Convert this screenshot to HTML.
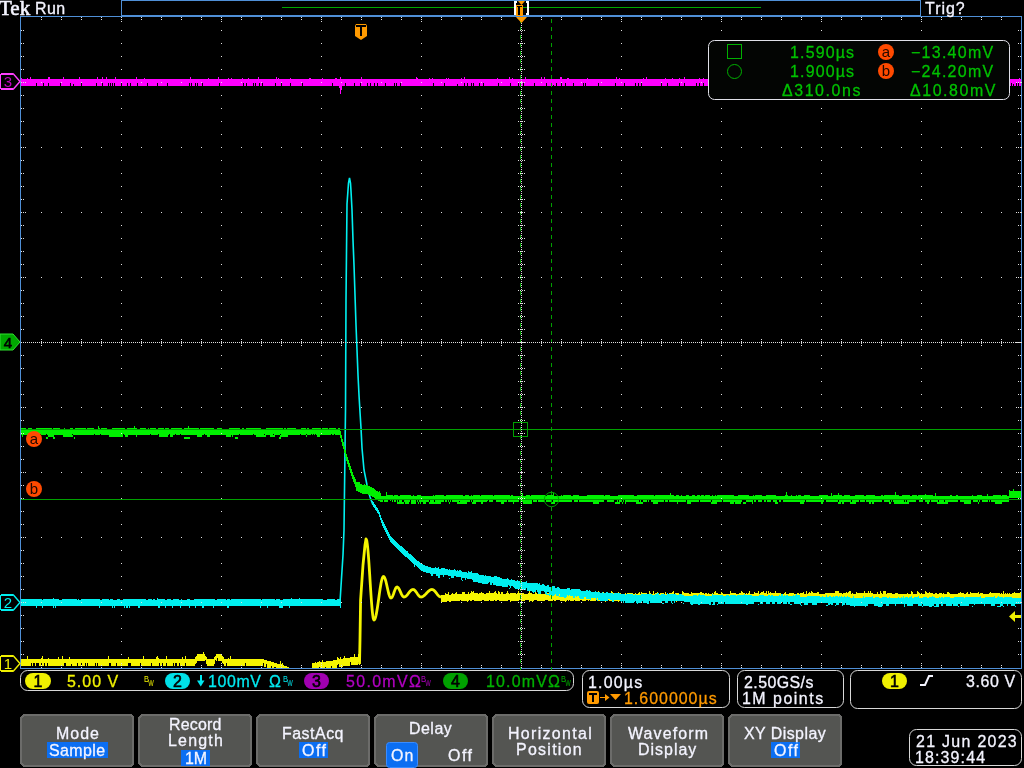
<!DOCTYPE html>
<html><head><meta charset="utf-8"><style>
html,body{margin:0;padding:0;background:#000;width:1024px;height:768px;overflow:hidden}
svg{position:absolute;left:0;top:0;display:block;will-change:transform}
text{white-space:pre}
</style></head><body>
<svg width="1024" height="768" viewBox="0 0 1024 768" shape-rendering="crispEdges">
<rect width="1024" height="768" fill="#000"/>
<path d="M121.5 0.5H920.5V15.5H121.5Z" fill="none" stroke="#4f8fd6"/><rect x="282" y="7" width="479" height="1" fill="#00a800"/><path d="M20.5 16.5H1021.5V668.5H20.5Z" fill="none" stroke="#4f8fd6"/><path d="M471 591h1v1h-1zM473 591h1v1h-1zM489 591h1v1h-1zM495 591h1v1h-1zM498 591h1v1h-1zM507 591h1v1h-1zM518 591h1v1h-1zM529 591h1v1h-1zM550 591h1v1h-1zM560 591h1v1h-1zM570 591h1v1h-1zM573 591h1v1h-1zM576 591h1v1h-1zM598 591h1v1h-1zM611 591h1v1h-1zM649 591h1v1h-1zM653 591h1v1h-1zM673 591h1v1h-1zM682 591h1v1h-1zM715 591h1v1h-1zM730 591h1v1h-1zM741 591h1v1h-1zM749 591h1v1h-1zM758 591h1v1h-1zM763 591h1v1h-1zM766 591h1v1h-1zM768 591h1v1h-1zM775 591h1v1h-1zM806 591h1v1h-1zM811 591h1v1h-1zM835 591h4v1h-4zM849 591h2v1h-2zM864 591h1v1h-1zM868 591h1v1h-1zM870 591h1v1h-1zM880 591h1v1h-1zM883 591h3v1h-3zM911 591h1v1h-1zM917 591h1v1h-1zM925 591h1v1h-1zM1003 591h1v1h-1zM448 592h1v1h-1zM456 592h1v1h-1zM462 592h3v1h-3zM468 592h1v1h-1zM471 592h3v1h-3zM481 592h1v1h-1zM489 592h1v1h-1zM494 592h2v1h-2zM498 592h2v1h-2zM501 592h2v1h-2zM507 592h1v1h-1zM518 592h1v1h-1zM529 592h1v1h-1zM535 592h1v1h-1zM550 592h1v1h-1zM552 592h1v1h-1zM558 592h1v1h-1zM560 592h1v1h-1zM570 592h1v1h-1zM573 592h1v1h-1zM576 592h1v1h-1zM598 592h1v1h-1zM603 592h1v1h-1zM607 592h1v1h-1zM611 592h2v1h-2zM618 592h1v1h-1zM639 592h1v1h-1zM641 592h1v1h-1zM649 592h1v1h-1zM653 592h1v1h-1zM657 592h1v1h-1zM665 592h1v1h-1zM672 592h2v1h-2zM682 592h2v1h-2zM691 592h1v1h-1zM700 592h2v1h-2zM714 592h2v1h-2zM721 592h1v1h-1zM730 592h1v1h-1zM741 592h2v1h-2zM749 592h1v1h-1zM754 592h1v1h-1zM758 592h1v1h-1zM761 592h3v1h-3zM766 592h1v1h-1zM768 592h1v1h-1zM770 592h1v1h-1zM775 592h1v1h-1zM785 592h1v1h-1zM803 592h1v1h-1zM806 592h1v1h-1zM809 592h1v1h-1zM811 592h2v1h-2zM817 592h2v1h-2zM835 592h4v1h-4zM846 592h1v1h-1zM848 592h3v1h-3zM856 592h1v1h-1zM864 592h1v1h-1zM868 592h1v1h-1zM870 592h1v1h-1zM877 592h1v1h-1zM880 592h1v1h-1zM883 592h3v1h-3zM911 592h2v1h-2zM917 592h2v1h-2zM925 592h2v1h-2zM929 592h1v1h-1zM947 592h2v1h-2zM960 592h1v1h-1zM967 592h1v1h-1zM970 592h1v1h-1zM978 592h1v1h-1zM990 592h1v1h-1zM1003 592h1v1h-1zM1014 592h1v1h-1zM1020 592h1v1h-1zM445 593h1v1h-1zM448 593h1v1h-1zM452 593h1v1h-1zM455 593h2v1h-2zM462 593h3v1h-3zM468 593h1v1h-1zM470 593h8v1h-8zM479 593h5v1h-5zM486 593h11v1h-11zM498 593h2v1h-2zM501 593h2v1h-2zM506 593h3v1h-3zM510 593h6v1h-6zM517 593h7v1h-7zM528 593h4v1h-4zM535 593h2v1h-2zM539 593h1v1h-1zM546 593h8v1h-8zM555 593h1v1h-1zM558 593h1v1h-1zM560 593h1v1h-1zM563 593h6v1h-6zM570 593h1v1h-1zM573 593h6v1h-6zM582 593h3v1h-3zM588 593h6v1h-6zM596 593h1v1h-1zM598 593h1v1h-1zM602 593h2v1h-2zM606 593h2v1h-2zM610 593h6v1h-6zM617 593h4v1h-4zM625 593h1v1h-1zM627 593h6v1h-6zM635 593h1v1h-1zM638 593h2v1h-2zM641 593h6v1h-6zM649 593h2v1h-2zM653 593h1v1h-1zM655 593h3v1h-3zM660 593h4v1h-4zM665 593h1v1h-1zM667 593h1v1h-1zM669 593h5v1h-5zM675 593h4v1h-4zM682 593h7v1h-7zM691 593h13v1h-13zM705 593h2v1h-2zM708 593h1v1h-1zM712 593h1v1h-1zM714 593h4v1h-4zM721 593h2v1h-2zM730 593h6v1h-6zM739 593h6v1h-6zM746 593h1v1h-1zM748 593h2v1h-2zM754 593h5v1h-5zM760 593h7v1h-7zM768 593h13v1h-13zM784 593h2v1h-2zM789 593h5v1h-5zM797 593h2v1h-2zM800 593h4v1h-4zM806 593h1v1h-1zM808 593h11v1h-11zM825 593h17v1h-17zM843 593h8v1h-8zM852 593h1v1h-1zM856 593h17v1h-17zM877 593h1v1h-1zM880 593h2v1h-2zM883 593h3v1h-3zM887 593h5v1h-5zM895 593h3v1h-3zM907 593h1v1h-1zM911 593h2v1h-2zM917 593h3v1h-3zM921 593h1v1h-1zM925 593h8v1h-8zM935 593h2v1h-2zM939 593h3v1h-3zM943 593h1v1h-1zM947 593h3v1h-3zM958 593h6v1h-6zM966 593h2v1h-2zM970 593h9v1h-9zM980 593h3v1h-3zM989 593h11v1h-11zM1001 593h1v1h-1zM1003 593h1v1h-1zM1005 593h1v1h-1zM1007 593h1v1h-1zM1009 593h1v1h-1zM1012 593h9v1h-9zM445 594h4v1h-4zM451 594h570v1h-570zM441 595h580v1h-580zM441 596h580v1h-580zM441 597h580v1h-580zM441 598h580v1h-580zM441 599h580v1h-580zM441 600h19v1h-19zM461 600h8v1h-8zM470 600h2v1h-2zM474 600h8v1h-8zM484 600h5v1h-5zM490 600h4v1h-4zM495 600h2v1h-2zM499 600h9v1h-9zM510 600h9v1h-9zM521 600h4v1h-4zM529 600h5v1h-5zM537 600h8v1h-8zM548 600h5v1h-5zM554 600h2v1h-2zM560 600h7v1h-7zM568 600h1v1h-1zM570 600h4v1h-4zM575 600h5v1h-5zM582 600h4v1h-4zM588 600h1v1h-1zM590 600h6v1h-6zM597 600h3v1h-3zM601 600h5v1h-5zM609 600h3v1h-3zM614 600h21v1h-21zM636 600h9v1h-9zM647 600h7v1h-7zM656 600h8v1h-8zM667 600h13v1h-13zM681 600h7v1h-7zM689 600h2v1h-2zM692 600h8v1h-8zM702 600h4v1h-4zM707 600h3v1h-3zM712 600h2v1h-2zM716 600h1v1h-1zM719 600h4v1h-4zM724 600h5v1h-5zM731 600h8v1h-8zM740 600h4v1h-4zM746 600h1v1h-1zM748 600h4v1h-4zM753 600h1v1h-1zM755 600h1v1h-1zM758 600h18v1h-18zM778 600h5v1h-5zM784 600h6v1h-6zM791 600h2v1h-2zM796 600h10v1h-10zM807 600h9v1h-9zM819 600h5v1h-5zM826 600h5v1h-5zM835 600h6v1h-6zM843 600h5v1h-5zM849 600h2v1h-2zM852 600h4v1h-4zM857 600h9v1h-9zM869 600h9v1h-9zM880 600h4v1h-4zM885 600h17v1h-17zM904 600h11v1h-11zM916 600h2v1h-2zM922 600h1v1h-1zM927 600h3v1h-3zM933 600h14v1h-14zM949 600h3v1h-3zM954 600h5v1h-5zM969 600h1v1h-1zM972 600h12v1h-12zM987 600h2v1h-2zM991 600h4v1h-4zM997 600h1v1h-1zM1005 600h2v1h-2zM1008 600h3v1h-3zM1013 600h2v1h-2zM1020 600h1v1h-1zM441 601h6v1h-6zM449 601h2v1h-2zM467 601h1v1h-1zM510 601h1v1h-1zM529 601h1v1h-1zM532 601h1v1h-1zM565 601h1v1h-1zM605 601h1v1h-1zM618 601h1v1h-1zM637 601h1v1h-1zM676 601h1v1h-1zM690 601h1v1h-1zM787 601h1v1h-1zM916 601h1v1h-1zM942 601h1v1h-1zM203 652h1v1h-1zM203 653h1v1h-1zM197 654h8v1h-8zM216 654h6v1h-6zM354 654h1v1h-1zM358 654h1v1h-1zM197 655h8v1h-8zM216 655h6v1h-6zM354 655h1v1h-1zM358 655h1v1h-1zM27 656h1v1h-1zM42 656h1v1h-1zM62 656h1v1h-1zM108 656h1v1h-1zM143 656h1v1h-1zM157 656h1v1h-1zM166 656h1v1h-1zM185 656h1v1h-1zM196 656h10v1h-10zM215 656h8v1h-8zM230 656h1v1h-1zM344 656h1v1h-1zM354 656h1v1h-1zM358 656h1v1h-1zM27 657h1v1h-1zM42 657h1v1h-1zM58 657h1v1h-1zM62 657h1v1h-1zM69 657h1v1h-1zM108 657h1v1h-1zM128 657h1v1h-1zM143 657h1v1h-1zM156 657h2v1h-2zM166 657h1v1h-1zM182 657h1v1h-1zM185 657h1v1h-1zM195 657h12v1h-12zM214 657h10v1h-10zM230 657h1v1h-1zM337 657h1v1h-1zM340 657h1v1h-1zM344 657h1v1h-1zM350 657h10v1h-10zM27 658h1v1h-1zM41 658h2v1h-2zM48 658h1v1h-1zM58 658h1v1h-1zM62 658h1v1h-1zM69 658h1v1h-1zM108 658h1v1h-1zM128 658h1v1h-1zM143 658h1v1h-1zM156 658h3v1h-3zM166 658h1v1h-1zM182 658h1v1h-1zM185 658h1v1h-1zM195 658h12v1h-12zM214 658h3v1h-3zM218 658h6v1h-6zM228 658h1v1h-1zM230 658h1v1h-1zM337 658h2v1h-2zM340 658h1v1h-1zM343 658h17v1h-17zM21 659h196v1h-196zM218 659h46v1h-46zM337 659h23v1h-23zM21 660h184v1h-184zM206 660h9v1h-9zM216 660h1v1h-1zM218 660h49v1h-49zM322 660h1v1h-1zM333 660h27v1h-27zM21 661h176v1h-176zM206 661h9v1h-9zM222 661h49v1h-49zM280 661h1v1h-1zM319 661h1v1h-1zM322 661h1v1h-1zM326 661h34v1h-34zM21 662h176v1h-176zM206 662h9v1h-9zM222 662h52v1h-52zM280 662h1v1h-1zM315 662h1v1h-1zM317 662h33v1h-33zM351 662h7v1h-7zM359 662h1v1h-1zM21 663h10v1h-10zM32 663h1v1h-1zM35 663h1v1h-1zM39 663h2v1h-2zM42 663h2v1h-2zM45 663h2v1h-2zM48 663h16v1h-16zM66 663h11v1h-11zM78 663h3v1h-3zM82 663h3v1h-3zM86 663h1v1h-1zM88 663h7v1h-7zM96 663h1v1h-1zM98 663h11v1h-11zM111 663h5v1h-5zM117 663h11v1h-11zM131 663h9v1h-9zM141 663h10v1h-10zM152 663h7v1h-7zM160 663h2v1h-2zM163 663h3v1h-3zM167 663h6v1h-6zM174 663h1v1h-1zM177 663h2v1h-2zM180 663h5v1h-5zM186 663h10v1h-10zM206 663h9v1h-9zM223 663h3v1h-3zM227 663h18v1h-18zM246 663h17v1h-17zM264 663h13v1h-13zM280 663h1v1h-1zM282 663h1v1h-1zM312 663h38v1h-38zM351 663h7v1h-7zM359 663h1v1h-1zM21 664h10v1h-10zM32 664h1v1h-1zM35 664h1v1h-1zM39 664h2v1h-2zM42 664h2v1h-2zM45 664h2v1h-2zM48 664h16v1h-16zM66 664h5v1h-5zM72 664h5v1h-5zM78 664h3v1h-3zM82 664h3v1h-3zM86 664h1v1h-1zM88 664h7v1h-7zM96 664h1v1h-1zM98 664h11v1h-11zM111 664h5v1h-5zM117 664h11v1h-11zM131 664h9v1h-9zM141 664h10v1h-10zM152 664h7v1h-7zM160 664h2v1h-2zM163 664h3v1h-3zM167 664h6v1h-6zM174 664h1v1h-1zM177 664h2v1h-2zM180 664h5v1h-5zM186 664h9v1h-9zM207 664h7v1h-7zM224 664h2v1h-2zM227 664h18v1h-18zM246 664h17v1h-17zM264 664h2v1h-2zM267 664h16v1h-16zM312 664h26v1h-26zM339 664h11v1h-11zM351 664h7v1h-7zM359 664h1v1h-1zM21 665h10v1h-10zM32 665h1v1h-1zM35 665h1v1h-1zM39 665h2v1h-2zM42 665h2v1h-2zM45 665h2v1h-2zM48 665h16v1h-16zM66 665h5v1h-5zM72 665h5v1h-5zM78 665h3v1h-3zM82 665h3v1h-3zM86 665h1v1h-1zM88 665h7v1h-7zM96 665h1v1h-1zM98 665h11v1h-11zM111 665h5v1h-5zM117 665h11v1h-11zM131 665h9v1h-9zM141 665h10v1h-10zM152 665h7v1h-7zM160 665h2v1h-2zM163 665h3v1h-3zM167 665h6v1h-6zM174 665h1v1h-1zM177 665h2v1h-2zM180 665h5v1h-5zM186 665h9v1h-9zM207 665h7v1h-7zM224 665h2v1h-2zM227 665h18v1h-18zM246 665h17v1h-17zM264 665h2v1h-2zM267 665h17v1h-17zM312 665h25v1h-25zM339 665h11v1h-11zM264 666h2v1h-2zM267 666h4v1h-4zM272 666h15v1h-15zM312 666h19v1h-19zM332 666h5v1h-5zM339 666h4v1h-4zM267 667h4v1h-4zM272 667h2v1h-2zM276 667h13v1h-13zM312 667h7v1h-7zM320 667h5v1h-5zM326 667h5v1h-5zM332 667h5v1h-5z" fill="#f5f500"/><path d="M359.50 664.00 L360.00 640.00 L360.60 600.00 L363.00 565.00 L365.00 545.00 L366.00 539.00 L366.33 539.35 L366.67 540.38 L367.00 542.08 L367.33 544.43 L367.67 547.37 L368.00 550.86 L368.33 554.85 L368.67 559.25 L369.00 564.00 L369.33 569.02 L369.67 574.21 L370.00 579.50 L370.33 584.79 L370.67 589.98 L371.00 595.00 L371.33 599.75 L371.67 604.15 L372.00 608.14 L372.33 611.63 L372.67 614.57 L373.00 616.92 L373.33 618.62 L373.67 619.65 L374.00 620.00 L374.34 619.86 L374.68 619.45 L375.02 618.78 L375.36 617.85 L375.70 616.67 L376.04 615.25 L376.38 613.63 L376.71 611.81 L377.05 609.82 L377.39 607.69 L377.73 605.43 L378.07 603.09 L378.41 600.69 L378.75 598.25 L379.09 595.81 L379.43 593.41 L379.77 591.07 L380.11 588.81 L380.45 586.68 L380.79 584.69 L381.12 582.87 L381.46 581.25 L381.80 579.83 L382.14 578.65 L382.48 577.72 L382.82 577.05 L383.16 576.64 L383.50 576.50 L383.84 576.61 L384.18 576.94 L384.52 577.47 L384.86 578.21 L385.20 579.13 L385.55 580.21 L385.89 581.44 L386.23 582.78 L386.57 584.22 L386.91 585.72 L387.25 587.25 L387.59 588.78 L387.93 590.28 L388.27 591.72 L388.61 593.06 L388.95 594.29 L389.30 595.37 L389.64 596.29 L389.98 597.03 L390.32 597.56 L390.66 597.89 L391.00 598.00 L391.33 597.92 L391.67 597.67 L392.00 597.26 L392.33 596.71 L392.67 596.04 L393.00 595.25 L393.33 594.38 L393.67 593.46 L394.00 592.50 L394.33 591.54 L394.67 590.62 L395.00 589.75 L395.33 588.96 L395.67 588.29 L396.00 587.74 L396.33 587.33 L396.67 587.08 L397.00 587.00 L397.33 587.06 L397.67 587.22 L398.00 587.50 L398.33 587.87 L398.67 588.33 L399.00 588.88 L399.33 589.50 L399.67 590.17 L400.00 590.89 L400.33 591.63 L400.67 592.37 L401.00 593.11 L401.33 593.83 L401.67 594.50 L402.00 595.12 L402.33 595.67 L402.67 596.13 L403.00 596.50 L403.33 596.78 L403.67 596.94 L404.00 597.00 L404.33 596.97 L404.67 596.90 L405.00 596.77 L405.33 596.60 L405.67 596.38 L406.00 596.12 L406.33 595.82 L406.67 595.49 L407.00 595.12 L407.33 594.74 L407.67 594.33 L408.00 593.90 L408.33 593.47 L408.67 593.03 L409.00 592.60 L409.33 592.17 L409.67 591.76 L410.00 591.38 L410.33 591.01 L410.67 590.68 L411.00 590.38 L411.33 590.12 L411.67 589.90 L412.00 589.73 L412.33 589.60 L412.67 589.53 L413.00 589.50 L413.33 589.53 L413.67 589.63 L414.00 589.79 L414.33 590.00 L414.67 590.27 L415.00 590.60 L415.33 590.97 L415.67 591.38 L416.00 591.81 L416.33 592.28 L416.67 592.76 L417.00 593.25 L417.33 593.74 L417.67 594.22 L418.00 594.69 L418.33 595.12 L418.67 595.53 L419.00 595.90 L419.33 596.23 L419.67 596.50 L420.00 596.71 L420.33 596.87 L420.67 596.97 L421.00 597.00 L421.33 596.98 L421.67 596.93 L422.00 596.85 L422.33 596.73 L422.67 596.58 L423.00 596.40 L423.33 596.20 L423.67 595.96 L424.00 595.71 L424.33 595.43 L424.67 595.12 L425.00 594.81 L425.33 594.48 L425.67 594.13 L426.00 593.78 L426.33 593.43 L426.67 593.07 L427.00 592.72 L427.33 592.37 L427.67 592.02 L428.00 591.69 L428.33 591.38 L428.67 591.07 L429.00 590.79 L429.33 590.54 L429.67 590.30 L430.00 590.10 L430.33 589.92 L430.67 589.77 L431.00 589.65 L431.33 589.57 L431.67 589.52 L432.00 589.50 L432.33 589.53 L432.67 589.60 L433.00 589.73 L433.33 589.90 L433.67 590.12 L434.00 590.38 L434.33 590.68 L434.67 591.01 L435.00 591.38 L435.33 591.76 L435.67 592.17 L436.00 592.60 L436.33 593.03 L436.67 593.47 L437.00 593.90 L437.33 594.33 L437.67 594.74 L438.00 595.12 L438.33 595.49 L438.67 595.82 L439.00 596.12 L439.33 596.38 L439.67 596.60 L440.00 596.77 L440.33 596.90 L440.67 596.97 L441.00 597.00" fill="none" stroke="#f5f500" stroke-width="2.8" stroke-linejoin="round" shape-rendering="auto"/><path d="M372 501h1v1h-1zM372 502h2v1h-2zM372 503h2v1h-2zM372 504h3v1h-3zM373 505h3v1h-3zM373 506h3v1h-3zM374 507h3v1h-3zM375 508h3v1h-3zM375 509h3v1h-3zM376 510h3v1h-3zM377 511h2v1h-2zM377 512h3v1h-3zM378 513h2v1h-2zM379 514h1v1h-1zM379 515h2v1h-2zM379 516h2v1h-2zM380 517h1v1h-1zM380 518h2v1h-2zM380 519h2v1h-2zM381 520h2v1h-2zM381 521h2v1h-2zM381 522h3v1h-3zM382 523h2v1h-2zM382 524h3v1h-3zM382 525h3v1h-3zM383 526h3v1h-3zM383 527h3v1h-3zM384 528h3v1h-3zM384 529h3v1h-3zM385 530h3v1h-3zM385 531h3v1h-3zM386 532h3v1h-3zM386 533h3v1h-3zM387 534h3v1h-3zM387 535h3v1h-3zM388 536h3v1h-3zM388 537h4v1h-4zM389 538h4v1h-4zM389 539h5v1h-5zM390 540h5v1h-5zM390 541h6v1h-6zM391 542h6v1h-6zM392 543h6v1h-6zM393 544h6v1h-6zM394 545h6v1h-6zM395 546h7v1h-7zM396 547h7v1h-7zM397 548h7v1h-7zM398 549h7v1h-7zM399 550h7v1h-7zM400 551h8v1h-8zM401 552h7v1h-7zM402 553h7v1h-7zM403 554h8v1h-8zM404 555h8v1h-8zM405 556h8v1h-8zM407 557h7v1h-7zM408 558h7v1h-7zM409 559h7v1h-7zM410 560h7v1h-7zM411 561h8v1h-8zM412 562h8v1h-8zM413 563h8v1h-8zM414 564h9v1h-9zM414 565h1v1h-1zM416 565h9v1h-9zM414 566h1v1h-1zM417 566h11v1h-11zM418 567h13v1h-13zM435 567h1v1h-1zM438 567h1v1h-1zM419 568h20v1h-20zM441 568h4v1h-4zM420 569h28v1h-28zM449 569h1v1h-1zM454 569h1v1h-1zM421 570h35v1h-35zM457 570h1v1h-1zM459 570h2v1h-2zM423 571h39v1h-39zM468 571h1v1h-1zM471 571h1v1h-1zM426 572h41v1h-41zM468 572h4v1h-4zM430 573h48v1h-48zM431 574h2v1h-2zM436 574h43v1h-43zM431 575h2v1h-2zM436 575h4v1h-4zM443 575h1v1h-1zM448 575h36v1h-36zM485 575h1v1h-1zM438 576h2v1h-2zM443 576h1v1h-1zM451 576h3v1h-3zM456 576h35v1h-35zM494 576h3v1h-3zM438 577h2v1h-2zM451 577h3v1h-3zM461 577h39v1h-39zM449 578h1v1h-1zM461 578h1v1h-1zM465 578h1v1h-1zM467 578h35v1h-35zM507 578h1v1h-1zM461 579h1v1h-1zM465 579h1v1h-1zM472 579h37v1h-37zM511 579h1v1h-1zM462 580h1v1h-1zM473 580h42v1h-42zM517 580h1v1h-1zM473 581h49v1h-49zM526 581h1v1h-1zM478 582h11v1h-11zM490 582h37v1h-37zM482 583h6v1h-6zM490 583h2v1h-2zM493 583h45v1h-45zM539 583h1v1h-1zM490 584h2v1h-2zM493 584h47v1h-47zM542 584h2v1h-2zM496 585h12v1h-12zM509 585h36v1h-36zM547 585h2v1h-2zM502 586h6v1h-6zM510 586h1v1h-1zM513 586h36v1h-36zM552 586h3v1h-3zM510 587h1v1h-1zM514 587h41v1h-41zM557 587h2v1h-2zM509 588h1v1h-1zM515 588h11v1h-11zM527 588h33v1h-33zM567 588h3v1h-3zM521 589h5v1h-5zM527 589h43v1h-43zM571 589h9v1h-9zM527 590h9v1h-9zM537 590h44v1h-44zM586 590h2v1h-2zM589 590h1v1h-1zM532 591h4v1h-4zM537 591h4v1h-4zM544 591h47v1h-47zM595 591h1v1h-1zM533 592h1v1h-1zM538 592h3v1h-3zM545 592h2v1h-2zM549 592h51v1h-51zM602 592h1v1h-1zM606 592h2v1h-2zM538 593h3v1h-3zM545 593h2v1h-2zM549 593h64v1h-64zM614 593h6v1h-6zM657 593h2v1h-2zM667 593h1v1h-1zM546 594h9v1h-9zM556 594h3v1h-3zM560 594h65v1h-65zM626 594h7v1h-7zM635 594h1v1h-1zM641 594h11v1h-11zM655 594h4v1h-4zM661 594h4v1h-4zM667 594h9v1h-9zM679 594h3v1h-3zM699 594h1v1h-1zM712 594h1v1h-1zM744 594h1v1h-1zM781 594h2v1h-2zM796 594h1v1h-1zM549 595h1v1h-1zM551 595h3v1h-3zM556 595h3v1h-3zM560 595h7v1h-7zM568 595h1v1h-1zM570 595h114v1h-114zM693 595h4v1h-4zM698 595h7v1h-7zM712 595h11v1h-11zM726 595h3v1h-3zM730 595h6v1h-6zM737 595h15v1h-15zM759 595h5v1h-5zM768 595h2v1h-2zM771 595h2v1h-2zM779 595h1v1h-1zM781 595h2v1h-2zM784 595h1v1h-1zM786 595h2v1h-2zM793 595h1v1h-1zM795 595h5v1h-5zM826 595h1v1h-1zM559 596h8v1h-8zM573 596h2v1h-2zM576 596h1v1h-1zM579 596h221v1h-221zM807 596h13v1h-13zM822 596h1v1h-1zM826 596h1v1h-1zM829 596h2v1h-2zM833 596h1v1h-1zM835 596h3v1h-3zM839 596h1v1h-1zM841 596h1v1h-1zM844 596h1v1h-1zM847 596h1v1h-1zM853 596h1v1h-1zM863 596h1v1h-1zM872 596h1v1h-1zM903 596h1v1h-1zM911 596h1v1h-1zM918 596h1v1h-1zM932 596h1v1h-1zM980 596h1v1h-1zM994 596h1v1h-1zM998 596h1v1h-1zM564 597h2v1h-2zM573 597h2v1h-2zM579 597h5v1h-5zM586 597h264v1h-264zM853 597h1v1h-1zM863 597h1v1h-1zM865 597h8v1h-8zM875 597h4v1h-4zM882 597h5v1h-5zM889 597h1v1h-1zM898 597h1v1h-1zM901 597h1v1h-1zM903 597h1v1h-1zM905 597h3v1h-3zM909 597h3v1h-3zM914 597h5v1h-5zM923 597h4v1h-4zM929 597h6v1h-6zM939 597h1v1h-1zM941 597h2v1h-2zM944 597h6v1h-6zM954 597h10v1h-10zM965 597h16v1h-16zM985 597h10v1h-10zM997 597h6v1h-6zM1004 597h8v1h-8zM53 598h1v1h-1zM157 598h1v1h-1zM291 598h1v1h-1zM299 598h1v1h-1zM580 598h4v1h-4zM586 598h5v1h-5zM596 598h1v1h-1zM598 598h423v1h-423zM21 599h21v1h-21zM43 599h16v1h-16zM62 599h15v1h-15zM78 599h1v1h-1zM81 599h19v1h-19zM102 599h7v1h-7zM110 599h3v1h-3zM117 599h3v1h-3zM123 599h23v1h-23zM148 599h4v1h-4zM153 599h2v1h-2zM157 599h8v1h-8zM167 599h4v1h-4zM173 599h6v1h-6zM181 599h1v1h-1zM187 599h3v1h-3zM194 599h21v1h-21zM217 599h9v1h-9zM227 599h3v1h-3zM231 599h30v1h-30zM262 599h13v1h-13zM276 599h4v1h-4zM283 599h40v1h-40zM327 599h8v1h-8zM337 599h4v1h-4zM590 599h1v1h-1zM596 599h1v1h-1zM598 599h10v1h-10zM610 599h411v1h-411zM21 600h320v1h-320zM597 600h1v1h-1zM600 600h8v1h-8zM612 600h2v1h-2zM620 600h401v1h-401zM21 601h320v1h-320zM612 601h2v1h-2zM621 601h1v1h-1zM623 601h1v1h-1zM625 601h10v1h-10zM636 601h6v1h-6zM643 601h6v1h-6zM650 601h12v1h-12zM665 601h3v1h-3zM671 601h1v1h-1zM674 601h1v1h-1zM684 601h337v1h-337zM21 602h320v1h-320zM621 602h1v1h-1zM623 602h1v1h-1zM625 602h9v1h-9zM636 602h6v1h-6zM643 602h6v1h-6zM650 602h12v1h-12zM665 602h3v1h-3zM671 602h1v1h-1zM674 602h1v1h-1zM690 602h21v1h-21zM713 602h2v1h-2zM718 602h6v1h-6zM725 602h29v1h-29zM760 602h3v1h-3zM766 602h4v1h-4zM772 602h3v1h-3zM777 602h4v1h-4zM783 602h4v1h-4zM788 602h2v1h-2zM794 602h227v1h-227zM21 603h320v1h-320zM637 603h1v1h-1zM647 603h2v1h-2zM662 603h2v1h-2zM672 603h1v1h-1zM683 603h1v1h-1zM690 603h21v1h-21zM713 603h2v1h-2zM718 603h6v1h-6zM725 603h29v1h-29zM760 603h3v1h-3zM766 603h4v1h-4zM772 603h3v1h-3zM777 603h4v1h-4zM783 603h4v1h-4zM788 603h2v1h-2zM794 603h7v1h-7zM804 603h4v1h-4zM812 603h5v1h-5zM828 603h5v1h-5zM836 603h3v1h-3zM842 603h3v1h-3zM846 603h175v1h-175zM21 604h320v1h-320zM691 604h2v1h-2zM698 604h2v1h-2zM709 604h2v1h-2zM712 604h3v1h-3zM717 604h1v1h-1zM746 604h2v1h-2zM758 604h1v1h-1zM790 604h2v1h-2zM800 604h1v1h-1zM804 604h4v1h-4zM812 604h5v1h-5zM828 604h2v1h-2zM831 604h2v1h-2zM836 604h3v1h-3zM842 604h3v1h-3zM846 604h22v1h-22zM874 604h9v1h-9zM886 604h3v1h-3zM895 604h1v1h-1zM904 604h1v1h-1zM907 604h6v1h-6zM918 604h4v1h-4zM923 604h11v1h-11zM936 604h3v1h-3zM941 604h2v1h-2zM946 604h6v1h-6zM953 604h5v1h-5zM960 604h9v1h-9zM974 604h1v1h-1zM984 604h1v1h-1zM991 604h4v1h-4zM1000 604h3v1h-3zM1007 604h1v1h-1zM1011 604h4v1h-4zM21 605h320v1h-320zM801 605h1v1h-1zM826 605h2v1h-2zM835 605h1v1h-1zM842 605h1v1h-1zM850 605h18v1h-18zM874 605h9v1h-9zM886 605h3v1h-3zM895 605h1v1h-1zM904 605h1v1h-1zM907 605h6v1h-6zM918 605h4v1h-4zM923 605h11v1h-11zM936 605h3v1h-3zM941 605h2v1h-2zM946 605h6v1h-6zM953 605h5v1h-5zM960 605h9v1h-9zM984 605h1v1h-1zM991 605h4v1h-4zM1000 605h3v1h-3zM1007 605h1v1h-1zM1011 605h4v1h-4zM36 606h1v1h-1zM42 606h1v1h-1zM53 606h1v1h-1zM55 606h1v1h-1zM99 606h1v1h-1zM112 606h1v1h-1zM114 606h1v1h-1zM124 606h1v1h-1zM126 606h2v1h-2zM129 606h1v1h-1zM138 606h2v1h-2zM158 606h2v1h-2zM165 606h1v1h-1zM172 606h1v1h-1zM180 606h1v1h-1zM189 606h1v1h-1zM195 606h1v1h-1zM202 606h2v1h-2zM213 606h1v1h-1zM227 606h2v1h-2zM260 606h1v1h-1zM267 606h1v1h-1zM279 606h4v1h-4zM289 606h1v1h-1zM340 606h1v1h-1zM854 606h1v1h-1zM865 606h1v1h-1zM878 606h4v1h-4zM904 606h1v1h-1zM922 606h1v1h-1zM929 606h3v1h-3zM934 606h5v1h-5zM958 606h1v1h-1zM972 606h1v1h-1zM997 606h4v1h-4zM1003 606h1v1h-1zM1015 606h1v1h-1zM36 607h1v1h-1zM42 607h1v1h-1zM53 607h1v1h-1zM55 607h1v1h-1zM99 607h1v1h-1zM112 607h1v1h-1zM114 607h1v1h-1zM124 607h1v1h-1zM126 607h2v1h-2zM129 607h1v1h-1zM138 607h2v1h-2zM158 607h2v1h-2zM165 607h1v1h-1zM172 607h1v1h-1zM180 607h1v1h-1zM189 607h1v1h-1zM195 607h1v1h-1zM202 607h2v1h-2zM213 607h1v1h-1zM227 607h2v1h-2zM260 607h1v1h-1zM267 607h1v1h-1zM279 607h4v1h-4zM289 607h1v1h-1zM340 607h1v1h-1z" fill="#00f0f0"/><path d="M340 602 L341.4 580 L343 555 L344 530 L345.5 410 L346 300 L347 204 L348.5 183 L349.5 178 L350.5 183 L351 191 L352 210 L353 240 L354 265 L355 295 L356 325 L357 350 L358 375 L359 395 L360 412 L361 428 L362 448 L364 470 L367 485 L370 497 L373 505" fill="none" stroke="#00f0f0" stroke-width="1.6" shape-rendering="auto"/><path d="M30 77h1v1h-1zM48 77h2v1h-2zM63 77h1v1h-1zM79 77h1v1h-1zM97 77h1v1h-1zM102 77h1v1h-1zM106 77h1v1h-1zM115 77h1v1h-1zM136 77h1v1h-1zM190 77h1v1h-1zM218 77h1v1h-1zM258 77h1v1h-1zM276 77h1v1h-1zM340 77h1v1h-1zM361 77h1v1h-1zM416 77h1v1h-1zM464 77h1v1h-1zM509 77h1v1h-1zM525 77h1v1h-1zM541 77h1v1h-1zM544 77h1v1h-1zM560 77h2v1h-2zM616 77h1v1h-1zM646 77h1v1h-1zM684 77h1v1h-1zM21 78h1v1h-1zM27 78h1v1h-1zM30 78h1v1h-1zM48 78h2v1h-2zM63 78h1v1h-1zM79 78h1v1h-1zM97 78h1v1h-1zM102 78h1v1h-1zM106 78h1v1h-1zM115 78h1v1h-1zM136 78h1v1h-1zM144 78h1v1h-1zM190 78h1v1h-1zM208 78h1v1h-1zM218 78h1v1h-1zM228 78h1v1h-1zM231 78h1v1h-1zM242 78h1v1h-1zM248 78h1v1h-1zM258 78h1v1h-1zM276 78h1v1h-1zM278 78h1v1h-1zM290 78h1v1h-1zM309 78h2v1h-2zM322 78h1v1h-1zM335 78h2v1h-2zM340 78h1v1h-1zM361 78h1v1h-1zM416 78h2v1h-2zM429 78h1v1h-1zM432 78h1v1h-1zM446 78h1v1h-1zM448 78h1v1h-1zM461 78h1v1h-1zM464 78h1v1h-1zM497 78h1v1h-1zM509 78h1v1h-1zM512 78h1v1h-1zM525 78h1v1h-1zM541 78h1v1h-1zM544 78h1v1h-1zM560 78h2v1h-2zM567 78h2v1h-2zM587 78h1v1h-1zM616 78h1v1h-1zM619 78h1v1h-1zM643 78h1v1h-1zM646 78h1v1h-1zM665 78h1v1h-1zM672 78h1v1h-1zM679 78h1v1h-1zM684 78h1v1h-1zM699 78h1v1h-1zM703 78h1v1h-1zM1019 78h1v1h-1zM21 79h688v1h-688zM1009 79h12v1h-12zM21 80h688v1h-688zM1009 80h12v1h-12zM21 81h688v1h-688zM1009 81h12v1h-12zM21 82h688v1h-688zM1009 82h12v1h-12zM21 83h15v1h-15zM37 83h6v1h-6zM44 83h4v1h-4zM49 83h11v1h-11zM61 83h9v1h-9zM71 83h10v1h-10zM82 83h14v1h-14zM97 83h5v1h-5zM103 83h5v1h-5zM109 83h1v1h-1zM111 83h1v1h-1zM113 83h1v1h-1zM115 83h6v1h-6zM122 83h5v1h-5zM128 83h2v1h-2zM131 83h6v1h-6zM138 83h9v1h-9zM148 83h9v1h-9zM158 83h9v1h-9zM168 83h21v1h-21zM190 83h1v1h-1zM192 83h3v1h-3zM196 83h1v1h-1zM198 83h4v1h-4zM203 83h16v1h-16zM220 83h23v1h-23zM244 83h2v1h-2zM247 83h6v1h-6zM254 83h1v1h-1zM256 83h3v1h-3zM260 83h2v1h-2zM263 83h12v1h-12zM276 83h5v1h-5zM282 83h8v1h-8zM291 83h11v1h-11zM303 83h29v1h-29zM333 83h12v1h-12zM346 83h8v1h-8zM355 83h5v1h-5zM361 83h6v1h-6zM368 83h2v1h-2zM371 83h3v1h-3zM375 83h2v1h-2zM378 83h7v1h-7zM386 83h8v1h-8zM395 83h1v1h-1zM397 83h3v1h-3zM401 83h32v1h-32zM434 83h10v1h-10zM445 83h19v1h-19zM465 83h2v1h-2zM468 83h3v1h-3zM472 83h1v1h-1zM474 83h5v1h-5zM480 83h3v1h-3zM484 83h14v1h-14zM499 83h11v1h-11zM511 83h7v1h-7zM519 83h1v1h-1zM521 83h2v1h-2zM524 83h10v1h-10zM535 83h11v1h-11zM547 83h4v1h-4zM552 83h4v1h-4zM557 83h4v1h-4zM562 83h3v1h-3zM566 83h7v1h-7zM574 83h9v1h-9zM584 83h1v1h-1zM586 83h12v1h-12zM599 83h16v1h-16zM616 83h8v1h-8zM625 83h10v1h-10zM636 83h2v1h-2zM639 83h2v1h-2zM642 83h19v1h-19zM662 83h5v1h-5zM668 83h11v1h-11zM680 83h4v1h-4zM685 83h11v1h-11zM697 83h2v1h-2zM700 83h3v1h-3zM704 83h5v1h-5zM1009 83h2v1h-2zM1012 83h4v1h-4zM1017 83h1v1h-1zM1019 83h2v1h-2zM21 84h15v1h-15zM37 84h6v1h-6zM44 84h4v1h-4zM49 84h11v1h-11zM61 84h9v1h-9zM71 84h2v1h-2zM74 84h7v1h-7zM82 84h14v1h-14zM97 84h5v1h-5zM103 84h5v1h-5zM109 84h1v1h-1zM111 84h1v1h-1zM113 84h1v1h-1zM115 84h6v1h-6zM122 84h5v1h-5zM128 84h2v1h-2zM131 84h6v1h-6zM138 84h9v1h-9zM148 84h9v1h-9zM158 84h9v1h-9zM168 84h21v1h-21zM190 84h1v1h-1zM192 84h3v1h-3zM196 84h1v1h-1zM198 84h4v1h-4zM203 84h16v1h-16zM220 84h23v1h-23zM244 84h2v1h-2zM247 84h6v1h-6zM254 84h1v1h-1zM256 84h3v1h-3zM260 84h2v1h-2zM263 84h12v1h-12zM276 84h5v1h-5zM282 84h8v1h-8zM291 84h11v1h-11zM303 84h29v1h-29zM333 84h12v1h-12zM346 84h8v1h-8zM355 84h5v1h-5zM361 84h6v1h-6zM368 84h2v1h-2zM371 84h3v1h-3zM375 84h2v1h-2zM378 84h7v1h-7zM386 84h8v1h-8zM395 84h1v1h-1zM397 84h3v1h-3zM401 84h32v1h-32zM434 84h10v1h-10zM445 84h12v1h-12zM458 84h6v1h-6zM465 84h2v1h-2zM468 84h3v1h-3zM472 84h1v1h-1zM474 84h5v1h-5zM480 84h3v1h-3zM484 84h14v1h-14zM499 84h11v1h-11zM511 84h7v1h-7zM519 84h1v1h-1zM521 84h2v1h-2zM524 84h10v1h-10zM535 84h11v1h-11zM547 84h4v1h-4zM552 84h4v1h-4zM557 84h4v1h-4zM562 84h3v1h-3zM566 84h7v1h-7zM574 84h9v1h-9zM584 84h1v1h-1zM586 84h12v1h-12zM599 84h16v1h-16zM616 84h8v1h-8zM625 84h10v1h-10zM636 84h2v1h-2zM639 84h2v1h-2zM642 84h19v1h-19zM662 84h5v1h-5zM668 84h11v1h-11zM680 84h4v1h-4zM685 84h11v1h-11zM697 84h2v1h-2zM700 84h3v1h-3zM704 84h5v1h-5zM1009 84h2v1h-2zM1012 84h1v1h-1zM1014 84h2v1h-2zM1017 84h1v1h-1zM1019 84h2v1h-2zM21 85h15v1h-15zM37 85h6v1h-6zM44 85h4v1h-4zM49 85h11v1h-11zM61 85h9v1h-9zM71 85h2v1h-2zM74 85h7v1h-7zM82 85h14v1h-14zM97 85h5v1h-5zM103 85h5v1h-5zM109 85h1v1h-1zM111 85h1v1h-1zM113 85h1v1h-1zM115 85h6v1h-6zM122 85h5v1h-5zM128 85h2v1h-2zM131 85h6v1h-6zM138 85h9v1h-9zM148 85h9v1h-9zM158 85h9v1h-9zM168 85h21v1h-21zM190 85h1v1h-1zM192 85h3v1h-3zM196 85h1v1h-1zM198 85h4v1h-4zM203 85h16v1h-16zM220 85h23v1h-23zM244 85h2v1h-2zM247 85h6v1h-6zM254 85h1v1h-1zM256 85h3v1h-3zM260 85h2v1h-2zM263 85h12v1h-12zM276 85h5v1h-5zM282 85h8v1h-8zM291 85h11v1h-11zM303 85h29v1h-29zM333 85h12v1h-12zM346 85h8v1h-8zM355 85h5v1h-5zM361 85h6v1h-6zM368 85h2v1h-2zM371 85h3v1h-3zM375 85h2v1h-2zM378 85h7v1h-7zM386 85h8v1h-8zM395 85h1v1h-1zM397 85h3v1h-3zM401 85h32v1h-32zM434 85h10v1h-10zM445 85h12v1h-12zM458 85h6v1h-6zM465 85h2v1h-2zM468 85h3v1h-3zM472 85h1v1h-1zM474 85h5v1h-5zM480 85h3v1h-3zM484 85h14v1h-14zM499 85h11v1h-11zM511 85h7v1h-7zM519 85h1v1h-1zM521 85h2v1h-2zM524 85h10v1h-10zM535 85h11v1h-11zM547 85h4v1h-4zM552 85h1v1h-1zM554 85h2v1h-2zM557 85h4v1h-4zM562 85h3v1h-3zM566 85h7v1h-7zM574 85h9v1h-9zM584 85h1v1h-1zM586 85h12v1h-12zM599 85h16v1h-16zM616 85h8v1h-8zM625 85h10v1h-10zM636 85h2v1h-2zM639 85h2v1h-2zM642 85h19v1h-19zM662 85h5v1h-5zM668 85h11v1h-11zM680 85h4v1h-4zM685 85h11v1h-11zM697 85h2v1h-2zM700 85h3v1h-3zM704 85h5v1h-5zM1009 85h2v1h-2zM1012 85h1v1h-1zM1014 85h2v1h-2zM1017 85h1v1h-1zM1019 85h2v1h-2zM339 86h3v1h-3zM339 87h3v1h-3zM340 88h2v1h-2zM340 89h2v1h-2zM340 90h1v1h-1zM340 91h1v1h-1zM340 92h1v1h-1zM340 93h1v1h-1z" fill="#ff00ff"/><path d="M98 426h1v1h-1zM134 426h1v1h-1zM188 426h1v1h-1zM98 427h1v1h-1zM134 427h1v1h-1zM188 427h1v1h-1zM21 428h5v1h-5zM28 428h4v1h-4zM36 428h16v1h-16zM53 428h7v1h-7zM64 428h1v1h-1zM70 428h3v1h-3zM75 428h11v1h-11zM87 428h7v1h-7zM98 428h2v1h-2zM101 428h6v1h-6zM112 428h13v1h-13zM127 428h10v1h-10zM140 428h6v1h-6zM148 428h1v1h-1zM150 428h6v1h-6zM158 428h6v1h-6zM165 428h4v1h-4zM171 428h11v1h-11zM184 428h15v1h-15zM200 428h14v1h-14zM217 428h5v1h-5zM229 428h11v1h-11zM242 428h2v1h-2zM246 428h15v1h-15zM266 428h17v1h-17zM284 428h2v1h-2zM287 428h9v1h-9zM301 428h5v1h-5zM307 428h2v1h-2zM312 428h9v1h-9zM322 428h6v1h-6zM329 428h7v1h-7zM338 428h2v1h-2zM21 429h319v1h-319zM21 430h319v1h-319zM21 431h320v1h-320zM21 432h320v1h-320zM21 433h320v1h-320zM21 434h7v1h-7zM29 434h11v1h-11zM41 434h5v1h-5zM47 434h25v1h-25zM73 434h21v1h-21zM95 434h5v1h-5zM101 434h22v1h-22zM124 434h26v1h-26zM151 434h7v1h-7zM159 434h10v1h-10zM170 434h5v1h-5zM176 434h4v1h-4zM181 434h23v1h-23zM205 434h34v1h-34zM240 434h13v1h-13zM254 434h10v1h-10zM265 434h8v1h-8zM274 434h6v1h-6zM281 434h19v1h-19zM301 434h5v1h-5zM307 434h4v1h-4zM312 434h1v1h-1zM314 434h1v1h-1zM316 434h15v1h-15zM332 434h2v1h-2zM335 434h6v1h-6zM22 435h1v1h-1zM48 435h6v1h-6zM63 435h10v1h-10zM109 435h14v1h-14zM125 435h3v1h-3zM136 435h1v1h-1zM159 435h9v1h-9zM170 435h3v1h-3zM197 435h5v1h-5zM207 435h3v1h-3zM226 435h5v1h-5zM232 435h1v1h-1zM256 435h10v1h-10zM270 435h5v1h-5zM280 435h8v1h-8zM306 435h1v1h-1zM317 435h3v1h-3zM340 435h2v1h-2zM22 436h1v1h-1zM48 436h6v1h-6zM63 436h10v1h-10zM109 436h14v1h-14zM125 436h3v1h-3zM136 436h1v1h-1zM159 436h9v1h-9zM170 436h3v1h-3zM197 436h5v1h-5zM207 436h3v1h-3zM226 436h5v1h-5zM232 436h1v1h-1zM256 436h10v1h-10zM270 436h5v1h-5zM280 436h8v1h-8zM306 436h1v1h-1zM317 436h3v1h-3zM340 436h2v1h-2zM46 437h2v1h-2zM53 437h2v1h-2zM74 437h1v1h-1zM184 437h6v1h-6zM235 437h3v1h-3zM279 437h2v1h-2zM340 437h2v1h-2zM46 438h2v1h-2zM53 438h2v1h-2zM74 438h1v1h-1zM184 438h6v1h-6zM235 438h3v1h-3zM279 438h2v1h-2zM341 438h1v1h-1zM341 439h2v1h-2zM341 440h2v1h-2zM341 441h2v1h-2zM342 442h2v1h-2zM342 443h2v1h-2zM342 444h2v1h-2zM342 445h2v1h-2zM343 446h2v1h-2zM343 447h2v1h-2zM343 448h2v1h-2zM344 449h1v1h-1zM344 450h2v1h-2zM344 451h2v1h-2zM344 452h2v1h-2zM345 453h1v1h-1zM345 454h2v1h-2zM345 455h2v1h-2zM345 456h2v1h-2zM346 457h2v1h-2zM346 458h2v1h-2zM346 459h2v1h-2zM346 460h3v1h-3zM347 461h2v1h-2zM347 462h2v1h-2zM347 463h3v1h-3zM348 464h2v1h-2zM348 465h2v1h-2zM348 466h3v1h-3zM349 467h2v1h-2zM349 468h2v1h-2zM349 469h3v1h-3zM350 470h2v1h-2zM350 471h2v1h-2zM350 472h3v1h-3zM351 473h2v1h-2zM351 474h2v1h-2zM351 475h3v1h-3zM352 476h2v1h-2zM352 477h3v1h-3zM352 478h3v1h-3zM353 479h3v1h-3zM353 480h3v1h-3zM353 481h3v1h-3zM354 482h6v1h-6zM354 483h6v1h-6zM355 484h7v1h-7zM364 484h1v1h-1zM355 485h13v1h-13zM355 486h15v1h-15zM356 487h16v1h-16zM356 488h18v1h-18zM356 489h19v1h-19zM1013 489h1v1h-1zM356 490h20v1h-20zM1009 490h1v1h-1zM1013 490h1v1h-1zM358 491h20v1h-20zM379 491h1v1h-1zM1009 491h12v1h-12zM360 492h20v1h-20zM386 492h1v1h-1zM786 492h1v1h-1zM895 492h1v1h-1zM1009 492h12v1h-12zM362 493h19v1h-19zM386 493h1v1h-1zM522 493h1v1h-1zM553 493h1v1h-1zM670 493h1v1h-1zM786 493h1v1h-1zM831 493h1v1h-1zM838 493h1v1h-1zM895 493h1v1h-1zM935 493h1v1h-1zM1009 493h12v1h-12zM368 494h13v1h-13zM386 494h1v1h-1zM522 494h1v1h-1zM553 494h1v1h-1zM670 494h1v1h-1zM786 494h1v1h-1zM831 494h1v1h-1zM838 494h1v1h-1zM895 494h1v1h-1zM925 494h1v1h-1zM935 494h1v1h-1zM987 494h1v1h-1zM1009 494h12v1h-12zM370 495h11v1h-11zM386 495h7v1h-7zM394 495h4v1h-4zM400 495h11v1h-11zM413 495h1v1h-1zM417 495h4v1h-4zM433 495h1v1h-1zM435 495h9v1h-9zM446 495h17v1h-17zM465 495h4v1h-4zM471 495h1v1h-1zM473 495h7v1h-7zM481 495h12v1h-12zM494 495h16v1h-16zM511 495h2v1h-2zM522 495h1v1h-1zM526 495h4v1h-4zM531 495h14v1h-14zM547 495h7v1h-7zM561 495h1v1h-1zM563 495h8v1h-8zM573 495h6v1h-6zM587 495h17v1h-17zM605 495h5v1h-5zM618 495h16v1h-16zM637 495h17v1h-17zM655 495h19v1h-19zM676 495h3v1h-3zM681 495h1v1h-1zM686 495h3v1h-3zM692 495h3v1h-3zM697 495h3v1h-3zM701 495h3v1h-3zM705 495h5v1h-5zM712 495h1v1h-1zM715 495h1v1h-1zM717 495h17v1h-17zM738 495h11v1h-11zM753 495h1v1h-1zM755 495h7v1h-7zM766 495h10v1h-10zM785 495h3v1h-3zM791 495h1v1h-1zM796 495h1v1h-1zM798 495h3v1h-3zM804 495h6v1h-6zM819 495h9v1h-9zM831 495h1v1h-1zM833 495h9v1h-9zM844 495h6v1h-6zM855 495h9v1h-9zM866 495h9v1h-9zM881 495h2v1h-2zM884 495h15v1h-15zM902 495h8v1h-8zM912 495h5v1h-5zM918 495h15v1h-15zM935 495h1v1h-1zM950 495h2v1h-2zM956 495h2v1h-2zM972 495h1v1h-1zM977 495h5v1h-5zM987 495h1v1h-1zM993 495h8v1h-8zM1002 495h5v1h-5zM1009 495h12v1h-12zM372 496h649v1h-649zM374 497h647v1h-647zM375 498h634v1h-634zM376 499h633v1h-633zM378 500h5v1h-5zM384 500h4v1h-4zM390 500h1v1h-1zM392 500h1v1h-1zM394 500h2v1h-2zM397 500h1v1h-1zM399 500h3v1h-3zM404 500h6v1h-6zM411 500h5v1h-5zM417 500h1v1h-1zM419 500h10v1h-10zM430 500h4v1h-4zM435 500h9v1h-9zM445 500h2v1h-2zM448 500h1v1h-1zM450 500h1v1h-1zM452 500h18v1h-18zM471 500h1v1h-1zM473 500h15v1h-15zM489 500h4v1h-4zM496 500h11v1h-11zM508 500h11v1h-11zM521 500h11v1h-11zM533 500h4v1h-4zM538 500h7v1h-7zM546 500h6v1h-6zM553 500h19v1h-19zM574 500h4v1h-4zM579 500h25v1h-25zM607 500h7v1h-7zM617 500h1v1h-1zM619 500h3v1h-3zM623 500h1v1h-1zM625 500h14v1h-14zM640 500h1v1h-1zM643 500h4v1h-4zM648 500h1v1h-1zM651 500h13v1h-13zM665 500h3v1h-3zM669 500h17v1h-17zM687 500h12v1h-12zM700 500h11v1h-11zM712 500h10v1h-10zM723 500h19v1h-19zM746 500h7v1h-7zM754 500h2v1h-2zM758 500h4v1h-4zM764 500h2v1h-2zM767 500h4v1h-4zM773 500h4v1h-4zM779 500h2v1h-2zM783 500h22v1h-22zM806 500h18v1h-18zM826 500h12v1h-12zM839 500h12v1h-12zM852 500h7v1h-7zM860 500h5v1h-5zM866 500h16v1h-16zM884 500h6v1h-6zM891 500h1v1h-1zM893 500h11v1h-11zM905 500h1v1h-1zM907 500h9v1h-9zM919 500h4v1h-4zM925 500h5v1h-5zM931 500h7v1h-7zM939 500h5v1h-5zM945 500h13v1h-13zM960 500h11v1h-11zM973 500h5v1h-5zM979 500h1v1h-1zM982 500h6v1h-6zM989 500h1v1h-1zM991 500h18v1h-18zM380 501h3v1h-3zM384 501h4v1h-4zM392 501h1v1h-1zM394 501h2v1h-2zM397 501h1v1h-1zM399 501h3v1h-3zM404 501h6v1h-6zM411 501h5v1h-5zM417 501h1v1h-1zM419 501h10v1h-10zM430 501h4v1h-4zM435 501h9v1h-9zM445 501h2v1h-2zM448 501h1v1h-1zM450 501h1v1h-1zM452 501h7v1h-7zM460 501h10v1h-10zM471 501h1v1h-1zM473 501h14v1h-14zM489 501h4v1h-4zM496 501h11v1h-11zM508 501h11v1h-11zM521 501h11v1h-11zM533 501h4v1h-4zM538 501h7v1h-7zM546 501h6v1h-6zM553 501h19v1h-19zM574 501h4v1h-4zM579 501h25v1h-25zM607 501h7v1h-7zM617 501h1v1h-1zM619 501h3v1h-3zM623 501h1v1h-1zM625 501h14v1h-14zM640 501h1v1h-1zM643 501h4v1h-4zM648 501h1v1h-1zM651 501h13v1h-13zM665 501h3v1h-3zM669 501h17v1h-17zM687 501h12v1h-12zM700 501h11v1h-11zM712 501h10v1h-10zM723 501h19v1h-19zM746 501h7v1h-7zM754 501h2v1h-2zM758 501h4v1h-4zM764 501h2v1h-2zM767 501h4v1h-4zM773 501h4v1h-4zM779 501h2v1h-2zM783 501h22v1h-22zM806 501h18v1h-18zM826 501h12v1h-12zM839 501h12v1h-12zM852 501h7v1h-7zM860 501h5v1h-5zM866 501h16v1h-16zM884 501h6v1h-6zM891 501h1v1h-1zM893 501h11v1h-11zM905 501h1v1h-1zM907 501h9v1h-9zM919 501h4v1h-4zM925 501h5v1h-5zM931 501h7v1h-7zM939 501h5v1h-5zM945 501h13v1h-13zM960 501h11v1h-11zM973 501h5v1h-5zM979 501h1v1h-1zM982 501h6v1h-6zM989 501h1v1h-1zM991 501h18v1h-18zM397 502h7v1h-7zM405 502h4v1h-4zM411 502h5v1h-5zM418 502h1v1h-1zM420 502h1v1h-1zM423 502h3v1h-3zM429 502h12v1h-12zM449 502h1v1h-1zM457 502h10v1h-10zM472 502h4v1h-4zM481 502h2v1h-2zM501 502h3v1h-3zM513 502h1v1h-1zM523 502h9v1h-9zM551 502h4v1h-4zM593 502h6v1h-6zM615 502h5v1h-5zM622 502h1v1h-1zM625 502h1v1h-1zM636 502h7v1h-7zM653 502h5v1h-5zM677 502h1v1h-1zM687 502h4v1h-4zM711 502h6v1h-6zM730 502h4v1h-4zM735 502h6v1h-6zM743 502h3v1h-3zM752 502h1v1h-1zM775 502h3v1h-3zM800 502h4v1h-4zM821 502h2v1h-2zM838 502h3v1h-3zM842 502h2v1h-2zM850 502h6v1h-6zM869 502h2v1h-2zM872 502h2v1h-2zM889 502h2v1h-2zM894 502h15v1h-15zM927 502h2v1h-2zM937 502h11v1h-11zM964 502h7v1h-7zM978 502h1v1h-1zM995 502h7v1h-7zM397 503h7v1h-7zM405 503h4v1h-4zM411 503h5v1h-5zM418 503h1v1h-1zM420 503h1v1h-1zM423 503h3v1h-3zM429 503h12v1h-12zM449 503h1v1h-1zM457 503h10v1h-10zM472 503h4v1h-4zM481 503h2v1h-2zM501 503h3v1h-3zM513 503h1v1h-1zM523 503h9v1h-9zM551 503h4v1h-4zM593 503h6v1h-6zM615 503h5v1h-5zM622 503h1v1h-1zM625 503h1v1h-1zM636 503h7v1h-7zM653 503h5v1h-5zM677 503h1v1h-1zM687 503h4v1h-4zM711 503h6v1h-6zM730 503h4v1h-4zM735 503h6v1h-6zM743 503h3v1h-3zM752 503h1v1h-1zM775 503h3v1h-3zM800 503h4v1h-4zM821 503h2v1h-2zM838 503h3v1h-3zM842 503h2v1h-2zM850 503h6v1h-6zM869 503h2v1h-2zM872 503h2v1h-2zM889 503h2v1h-2zM894 503h15v1h-15zM927 503h2v1h-2zM937 503h11v1h-11zM964 503h7v1h-7zM978 503h1v1h-1zM995 503h7v1h-7z" fill="#00f000"/><rect x="21" y="429" width="1000" height="1" fill="#00a000"/><rect x="21" y="499" width="1000" height="1" fill="#00a000"/><path d="M520 19h1v4h-1zM520 27h1v4h-1zM520 35h1v4h-1zM520 43h1v4h-1zM520 51h1v4h-1zM520 59h1v4h-1zM520 67h1v4h-1zM520 75h1v4h-1zM520 83h1v4h-1zM520 91h1v4h-1zM520 99h1v4h-1zM520 107h1v4h-1zM520 115h1v4h-1zM520 123h1v4h-1zM520 131h1v4h-1zM520 139h1v4h-1zM520 147h1v4h-1zM520 155h1v4h-1zM520 163h1v4h-1zM520 171h1v4h-1zM520 179h1v4h-1zM520 187h1v4h-1zM520 195h1v4h-1zM520 203h1v4h-1zM520 211h1v4h-1zM520 219h1v4h-1zM520 227h1v4h-1zM520 235h1v4h-1zM520 243h1v4h-1zM520 251h1v4h-1zM520 259h1v4h-1zM520 267h1v4h-1zM520 275h1v4h-1zM520 283h1v4h-1zM520 291h1v4h-1zM520 299h1v4h-1zM520 307h1v4h-1zM520 315h1v4h-1zM520 323h1v4h-1zM520 331h1v4h-1zM520 339h1v4h-1zM520 347h1v4h-1zM520 355h1v4h-1zM520 363h1v4h-1zM520 371h1v4h-1zM520 379h1v4h-1zM520 387h1v4h-1zM520 395h1v4h-1zM520 403h1v4h-1zM520 411h1v4h-1zM520 419h1v4h-1zM520 427h1v4h-1zM520 435h1v4h-1zM520 443h1v4h-1zM520 451h1v4h-1zM520 459h1v4h-1zM520 467h1v4h-1zM520 475h1v4h-1zM520 483h1v4h-1zM520 491h1v4h-1zM520 499h1v4h-1zM520 507h1v4h-1zM520 515h1v4h-1zM520 523h1v4h-1zM520 531h1v4h-1zM520 539h1v4h-1zM520 547h1v4h-1zM520 555h1v4h-1zM520 563h1v4h-1zM520 571h1v4h-1zM520 579h1v4h-1zM520 587h1v4h-1zM520 595h1v4h-1zM520 603h1v4h-1zM520 611h1v4h-1zM520 619h1v4h-1zM520 627h1v4h-1zM520 635h1v4h-1zM520 643h1v4h-1zM520 651h1v4h-1zM520 659h1v4h-1zM520 667h1v4h-1zM551 19h1v4h-1zM551 27h1v4h-1zM551 35h1v4h-1zM551 43h1v4h-1zM551 51h1v4h-1zM551 59h1v4h-1zM551 67h1v4h-1zM551 75h1v4h-1zM551 83h1v4h-1zM551 91h1v4h-1zM551 99h1v4h-1zM551 107h1v4h-1zM551 115h1v4h-1zM551 123h1v4h-1zM551 131h1v4h-1zM551 139h1v4h-1zM551 147h1v4h-1zM551 155h1v4h-1zM551 163h1v4h-1zM551 171h1v4h-1zM551 179h1v4h-1zM551 187h1v4h-1zM551 195h1v4h-1zM551 203h1v4h-1zM551 211h1v4h-1zM551 219h1v4h-1zM551 227h1v4h-1zM551 235h1v4h-1zM551 243h1v4h-1zM551 251h1v4h-1zM551 259h1v4h-1zM551 267h1v4h-1zM551 275h1v4h-1zM551 283h1v4h-1zM551 291h1v4h-1zM551 299h1v4h-1zM551 307h1v4h-1zM551 315h1v4h-1zM551 323h1v4h-1zM551 331h1v4h-1zM551 339h1v4h-1zM551 347h1v4h-1zM551 355h1v4h-1zM551 363h1v4h-1zM551 371h1v4h-1zM551 379h1v4h-1zM551 387h1v4h-1zM551 395h1v4h-1zM551 403h1v4h-1zM551 411h1v4h-1zM551 419h1v4h-1zM551 427h1v4h-1zM551 435h1v4h-1zM551 443h1v4h-1zM551 451h1v4h-1zM551 459h1v4h-1zM551 467h1v4h-1zM551 475h1v4h-1zM551 483h1v4h-1zM551 491h1v4h-1zM551 499h1v4h-1zM551 507h1v4h-1zM551 515h1v4h-1zM551 523h1v4h-1zM551 531h1v4h-1zM551 539h1v4h-1zM551 547h1v4h-1zM551 555h1v4h-1zM551 563h1v4h-1zM551 571h1v4h-1zM551 579h1v4h-1zM551 587h1v4h-1zM551 595h1v4h-1zM551 603h1v4h-1zM551 611h1v4h-1zM551 619h1v4h-1zM551 627h1v4h-1zM551 635h1v4h-1zM551 643h1v4h-1zM551 651h1v4h-1zM551 659h1v4h-1zM551 667h1v4h-1z" fill="#00a000"/><path d="M513.5 422.5H527.5V436.5H513.5Z" fill="none" stroke="#00a000"/><circle cx="551.5" cy="499.5" r="7.2" fill="none" stroke="#00a000" shape-rendering="auto"/><path d="M21 30h1v1h-1zM21 43h1v1h-1zM21 56h1v1h-1zM21 69h1v1h-1zM21 82h1v1h-1zM21 95h1v1h-1zM21 108h1v1h-1zM21 121h1v1h-1zM21 134h1v1h-1zM21 147h1v1h-1zM21 160h1v1h-1zM21 173h1v1h-1zM21 186h1v1h-1zM21 199h1v1h-1zM21 212h1v1h-1zM21 225h1v1h-1zM21 238h1v1h-1zM21 251h1v1h-1zM21 264h1v1h-1zM21 277h1v1h-1zM21 290h1v1h-1zM21 303h1v1h-1zM21 316h1v1h-1zM21 329h1v1h-1zM21 342h1v1h-1zM21 355h1v1h-1zM21 368h1v1h-1zM21 381h1v1h-1zM21 394h1v1h-1zM21 407h1v1h-1zM21 420h1v1h-1zM21 433h1v1h-1zM21 446h1v1h-1zM21 459h1v1h-1zM21 472h1v1h-1zM21 485h1v1h-1zM21 498h1v1h-1zM21 511h1v1h-1zM21 524h1v1h-1zM21 537h1v1h-1zM21 550h1v1h-1zM21 563h1v1h-1zM21 576h1v1h-1zM21 589h1v1h-1zM21 602h1v1h-1zM21 615h1v1h-1zM21 628h1v1h-1zM21 641h1v1h-1zM21 654h1v1h-1zM23 30h1v1h-1zM23 43h1v1h-1zM23 56h1v1h-1zM23 69h1v1h-1zM23 82h1v1h-1zM23 95h1v1h-1zM23 108h1v1h-1zM23 121h1v1h-1zM23 134h1v1h-1zM23 147h1v1h-1zM23 160h1v1h-1zM23 173h1v1h-1zM23 186h1v1h-1zM23 199h1v1h-1zM23 212h1v1h-1zM23 225h1v1h-1zM23 238h1v1h-1zM23 251h1v1h-1zM23 264h1v1h-1zM23 277h1v1h-1zM23 290h1v1h-1zM23 303h1v1h-1zM23 316h1v1h-1zM23 329h1v1h-1zM23 342h1v1h-1zM23 355h1v1h-1zM23 368h1v1h-1zM23 381h1v1h-1zM23 394h1v1h-1zM23 407h1v1h-1zM23 420h1v1h-1zM23 433h1v1h-1zM23 446h1v1h-1zM23 459h1v1h-1zM23 472h1v1h-1zM23 485h1v1h-1zM23 498h1v1h-1zM23 511h1v1h-1zM23 524h1v1h-1zM23 537h1v1h-1zM23 550h1v1h-1zM23 563h1v1h-1zM23 576h1v1h-1zM23 589h1v1h-1zM23 602h1v1h-1zM23 615h1v1h-1zM23 628h1v1h-1zM23 641h1v1h-1zM23 654h1v1h-1zM25 82h1v1h-1zM25 147h1v1h-1zM25 212h1v1h-1zM25 277h1v1h-1zM25 342h1v1h-1zM25 407h1v1h-1zM25 472h1v1h-1zM25 537h1v1h-1zM25 602h1v1h-1zM27 342h1v1h-1zM29 342h1v1h-1zM31 342h1v1h-1zM33 342h1v1h-1zM35 342h1v1h-1zM37 342h1v1h-1zM39 342h1v1h-1zM41 17h1v1h-1zM41 19h1v1h-1zM41 82h1v1h-1zM41 147h1v1h-1zM41 212h1v1h-1zM41 277h1v1h-1zM41 339h1v1h-1zM41 341h1v1h-1zM41 342h1v1h-1zM41 343h1v1h-1zM41 345h1v1h-1zM41 407h1v1h-1zM41 472h1v1h-1zM41 537h1v1h-1zM41 602h1v1h-1zM41 665h1v1h-1zM41 667h1v1h-1zM43 342h1v1h-1zM45 342h1v1h-1zM47 342h1v1h-1zM49 342h1v1h-1zM51 342h1v1h-1zM53 342h1v1h-1zM55 342h1v1h-1zM57 342h1v1h-1zM59 342h1v1h-1zM61 17h1v1h-1zM61 19h1v1h-1zM61 82h1v1h-1zM61 147h1v1h-1zM61 212h1v1h-1zM61 277h1v1h-1zM61 339h1v1h-1zM61 341h1v1h-1zM61 342h1v1h-1zM61 343h1v1h-1zM61 345h1v1h-1zM61 407h1v1h-1zM61 472h1v1h-1zM61 537h1v1h-1zM61 602h1v1h-1zM61 665h1v1h-1zM61 667h1v1h-1zM63 342h1v1h-1zM65 342h1v1h-1zM67 342h1v1h-1zM69 342h1v1h-1zM71 342h1v1h-1zM73 342h1v1h-1zM75 342h1v1h-1zM77 342h1v1h-1zM79 342h1v1h-1zM81 17h1v1h-1zM81 19h1v1h-1zM81 82h1v1h-1zM81 147h1v1h-1zM81 212h1v1h-1zM81 277h1v1h-1zM81 339h1v1h-1zM81 341h1v1h-1zM81 342h1v1h-1zM81 343h1v1h-1zM81 345h1v1h-1zM81 407h1v1h-1zM81 472h1v1h-1zM81 537h1v1h-1zM81 602h1v1h-1zM81 665h1v1h-1zM81 667h1v1h-1zM83 342h1v1h-1zM85 342h1v1h-1zM87 342h1v1h-1zM89 342h1v1h-1zM91 342h1v1h-1zM93 342h1v1h-1zM95 342h1v1h-1zM97 342h1v1h-1zM99 342h1v1h-1zM101 17h1v1h-1zM101 19h1v1h-1zM101 82h1v1h-1zM101 147h1v1h-1zM101 212h1v1h-1zM101 277h1v1h-1zM101 339h1v1h-1zM101 341h1v1h-1zM101 342h1v1h-1zM101 343h1v1h-1zM101 345h1v1h-1zM101 407h1v1h-1zM101 472h1v1h-1zM101 537h1v1h-1zM101 602h1v1h-1zM101 665h1v1h-1zM101 667h1v1h-1zM103 342h1v1h-1zM105 342h1v1h-1zM107 342h1v1h-1zM109 342h1v1h-1zM111 342h1v1h-1zM113 342h1v1h-1zM115 342h1v1h-1zM117 342h1v1h-1zM119 342h1v1h-1zM121 17h1v1h-1zM121 19h1v1h-1zM121 21h1v1h-1zM121 30h1v1h-1zM121 43h1v1h-1zM121 56h1v1h-1zM121 69h1v1h-1zM121 82h1v1h-1zM121 95h1v1h-1zM121 108h1v1h-1zM121 121h1v1h-1zM121 134h1v1h-1zM121 147h1v1h-1zM121 160h1v1h-1zM121 173h1v1h-1zM121 186h1v1h-1zM121 199h1v1h-1zM121 212h1v1h-1zM121 225h1v1h-1zM121 238h1v1h-1zM121 251h1v1h-1zM121 264h1v1h-1zM121 277h1v1h-1zM121 290h1v1h-1zM121 303h1v1h-1zM121 316h1v1h-1zM121 329h1v1h-1zM121 339h1v1h-1zM121 341h1v1h-1zM121 342h1v1h-1zM121 343h1v1h-1zM121 345h1v1h-1zM121 355h1v1h-1zM121 368h1v1h-1zM121 381h1v1h-1zM121 394h1v1h-1zM121 407h1v1h-1zM121 420h1v1h-1zM121 433h1v1h-1zM121 446h1v1h-1zM121 459h1v1h-1zM121 472h1v1h-1zM121 485h1v1h-1zM121 498h1v1h-1zM121 511h1v1h-1zM121 524h1v1h-1zM121 537h1v1h-1zM121 550h1v1h-1zM121 563h1v1h-1zM121 576h1v1h-1zM121 589h1v1h-1zM121 602h1v1h-1zM121 615h1v1h-1zM121 628h1v1h-1zM121 641h1v1h-1zM121 654h1v1h-1zM121 663h1v1h-1zM121 665h1v1h-1zM121 667h1v1h-1zM123 342h1v1h-1zM125 342h1v1h-1zM127 342h1v1h-1zM129 342h1v1h-1zM131 342h1v1h-1zM133 342h1v1h-1zM135 342h1v1h-1zM137 342h1v1h-1zM139 342h1v1h-1zM141 17h1v1h-1zM141 19h1v1h-1zM141 82h1v1h-1zM141 147h1v1h-1zM141 212h1v1h-1zM141 277h1v1h-1zM141 339h1v1h-1zM141 341h1v1h-1zM141 342h1v1h-1zM141 343h1v1h-1zM141 345h1v1h-1zM141 407h1v1h-1zM141 472h1v1h-1zM141 537h1v1h-1zM141 602h1v1h-1zM141 665h1v1h-1zM141 667h1v1h-1zM143 342h1v1h-1zM145 342h1v1h-1zM147 342h1v1h-1zM149 342h1v1h-1zM151 342h1v1h-1zM153 342h1v1h-1zM155 342h1v1h-1zM157 342h1v1h-1zM159 342h1v1h-1zM161 17h1v1h-1zM161 19h1v1h-1zM161 82h1v1h-1zM161 147h1v1h-1zM161 212h1v1h-1zM161 277h1v1h-1zM161 339h1v1h-1zM161 341h1v1h-1zM161 342h1v1h-1zM161 343h1v1h-1zM161 345h1v1h-1zM161 407h1v1h-1zM161 472h1v1h-1zM161 537h1v1h-1zM161 602h1v1h-1zM161 665h1v1h-1zM161 667h1v1h-1zM163 342h1v1h-1zM165 342h1v1h-1zM167 342h1v1h-1zM169 342h1v1h-1zM171 342h1v1h-1zM173 342h1v1h-1zM175 342h1v1h-1zM177 342h1v1h-1zM179 342h1v1h-1zM181 17h1v1h-1zM181 19h1v1h-1zM181 82h1v1h-1zM181 147h1v1h-1zM181 212h1v1h-1zM181 277h1v1h-1zM181 339h1v1h-1zM181 341h1v1h-1zM181 342h1v1h-1zM181 343h1v1h-1zM181 345h1v1h-1zM181 407h1v1h-1zM181 472h1v1h-1zM181 537h1v1h-1zM181 602h1v1h-1zM181 665h1v1h-1zM181 667h1v1h-1zM183 342h1v1h-1zM185 342h1v1h-1zM187 342h1v1h-1zM189 342h1v1h-1zM191 342h1v1h-1zM193 342h1v1h-1zM195 342h1v1h-1zM197 342h1v1h-1zM199 342h1v1h-1zM201 17h1v1h-1zM201 19h1v1h-1zM201 82h1v1h-1zM201 147h1v1h-1zM201 212h1v1h-1zM201 277h1v1h-1zM201 339h1v1h-1zM201 341h1v1h-1zM201 342h1v1h-1zM201 343h1v1h-1zM201 345h1v1h-1zM201 407h1v1h-1zM201 472h1v1h-1zM201 537h1v1h-1zM201 602h1v1h-1zM201 665h1v1h-1zM201 667h1v1h-1zM203 342h1v1h-1zM205 342h1v1h-1zM207 342h1v1h-1zM209 342h1v1h-1zM211 342h1v1h-1zM213 342h1v1h-1zM215 342h1v1h-1zM217 342h1v1h-1zM219 342h1v1h-1zM221 17h1v1h-1zM221 19h1v1h-1zM221 21h1v1h-1zM221 30h1v1h-1zM221 43h1v1h-1zM221 56h1v1h-1zM221 69h1v1h-1zM221 82h1v1h-1zM221 95h1v1h-1zM221 108h1v1h-1zM221 121h1v1h-1zM221 134h1v1h-1zM221 147h1v1h-1zM221 160h1v1h-1zM221 173h1v1h-1zM221 186h1v1h-1zM221 199h1v1h-1zM221 212h1v1h-1zM221 225h1v1h-1zM221 238h1v1h-1zM221 251h1v1h-1zM221 264h1v1h-1zM221 277h1v1h-1zM221 290h1v1h-1zM221 303h1v1h-1zM221 316h1v1h-1zM221 329h1v1h-1zM221 339h1v1h-1zM221 341h1v1h-1zM221 342h1v1h-1zM221 343h1v1h-1zM221 345h1v1h-1zM221 355h1v1h-1zM221 368h1v1h-1zM221 381h1v1h-1zM221 394h1v1h-1zM221 407h1v1h-1zM221 420h1v1h-1zM221 433h1v1h-1zM221 446h1v1h-1zM221 459h1v1h-1zM221 472h1v1h-1zM221 485h1v1h-1zM221 498h1v1h-1zM221 511h1v1h-1zM221 524h1v1h-1zM221 537h1v1h-1zM221 550h1v1h-1zM221 563h1v1h-1zM221 576h1v1h-1zM221 589h1v1h-1zM221 602h1v1h-1zM221 615h1v1h-1zM221 628h1v1h-1zM221 641h1v1h-1zM221 654h1v1h-1zM221 663h1v1h-1zM221 665h1v1h-1zM221 667h1v1h-1zM223 342h1v1h-1zM225 342h1v1h-1zM227 342h1v1h-1zM229 342h1v1h-1zM231 342h1v1h-1zM233 342h1v1h-1zM235 342h1v1h-1zM237 342h1v1h-1zM239 342h1v1h-1zM241 17h1v1h-1zM241 19h1v1h-1zM241 82h1v1h-1zM241 147h1v1h-1zM241 212h1v1h-1zM241 277h1v1h-1zM241 339h1v1h-1zM241 341h1v1h-1zM241 342h1v1h-1zM241 343h1v1h-1zM241 345h1v1h-1zM241 407h1v1h-1zM241 472h1v1h-1zM241 537h1v1h-1zM241 602h1v1h-1zM241 665h1v1h-1zM241 667h1v1h-1zM243 342h1v1h-1zM245 342h1v1h-1zM247 342h1v1h-1zM249 342h1v1h-1zM251 342h1v1h-1zM253 342h1v1h-1zM255 342h1v1h-1zM257 342h1v1h-1zM259 342h1v1h-1zM261 17h1v1h-1zM261 19h1v1h-1zM261 82h1v1h-1zM261 147h1v1h-1zM261 212h1v1h-1zM261 277h1v1h-1zM261 339h1v1h-1zM261 341h1v1h-1zM261 342h1v1h-1zM261 343h1v1h-1zM261 345h1v1h-1zM261 407h1v1h-1zM261 472h1v1h-1zM261 537h1v1h-1zM261 602h1v1h-1zM261 665h1v1h-1zM261 667h1v1h-1zM263 342h1v1h-1zM265 342h1v1h-1zM267 342h1v1h-1zM269 342h1v1h-1zM271 342h1v1h-1zM273 342h1v1h-1zM275 342h1v1h-1zM277 342h1v1h-1zM279 342h1v1h-1zM281 17h1v1h-1zM281 19h1v1h-1zM281 82h1v1h-1zM281 147h1v1h-1zM281 212h1v1h-1zM281 277h1v1h-1zM281 339h1v1h-1zM281 341h1v1h-1zM281 342h1v1h-1zM281 343h1v1h-1zM281 345h1v1h-1zM281 407h1v1h-1zM281 472h1v1h-1zM281 537h1v1h-1zM281 602h1v1h-1zM281 665h1v1h-1zM281 667h1v1h-1zM283 342h1v1h-1zM285 342h1v1h-1zM287 342h1v1h-1zM289 342h1v1h-1zM291 342h1v1h-1zM293 342h1v1h-1zM295 342h1v1h-1zM297 342h1v1h-1zM299 342h1v1h-1zM301 17h1v1h-1zM301 19h1v1h-1zM301 82h1v1h-1zM301 147h1v1h-1zM301 212h1v1h-1zM301 277h1v1h-1zM301 339h1v1h-1zM301 341h1v1h-1zM301 342h1v1h-1zM301 343h1v1h-1zM301 345h1v1h-1zM301 407h1v1h-1zM301 472h1v1h-1zM301 537h1v1h-1zM301 602h1v1h-1zM301 665h1v1h-1zM301 667h1v1h-1zM303 342h1v1h-1zM305 342h1v1h-1zM307 342h1v1h-1zM309 342h1v1h-1zM311 342h1v1h-1zM313 342h1v1h-1zM315 342h1v1h-1zM317 342h1v1h-1zM319 342h1v1h-1zM321 17h1v1h-1zM321 19h1v1h-1zM321 21h1v1h-1zM321 30h1v1h-1zM321 43h1v1h-1zM321 56h1v1h-1zM321 69h1v1h-1zM321 82h1v1h-1zM321 95h1v1h-1zM321 108h1v1h-1zM321 121h1v1h-1zM321 134h1v1h-1zM321 147h1v1h-1zM321 160h1v1h-1zM321 173h1v1h-1zM321 186h1v1h-1zM321 199h1v1h-1zM321 212h1v1h-1zM321 225h1v1h-1zM321 238h1v1h-1zM321 251h1v1h-1zM321 264h1v1h-1zM321 277h1v1h-1zM321 290h1v1h-1zM321 303h1v1h-1zM321 316h1v1h-1zM321 329h1v1h-1zM321 339h1v1h-1zM321 341h1v1h-1zM321 342h1v1h-1zM321 343h1v1h-1zM321 345h1v1h-1zM321 355h1v1h-1zM321 368h1v1h-1zM321 381h1v1h-1zM321 394h1v1h-1zM321 407h1v1h-1zM321 420h1v1h-1zM321 433h1v1h-1zM321 446h1v1h-1zM321 459h1v1h-1zM321 472h1v1h-1zM321 485h1v1h-1zM321 498h1v1h-1zM321 511h1v1h-1zM321 524h1v1h-1zM321 537h1v1h-1zM321 550h1v1h-1zM321 563h1v1h-1zM321 576h1v1h-1zM321 589h1v1h-1zM321 602h1v1h-1zM321 615h1v1h-1zM321 628h1v1h-1zM321 641h1v1h-1zM321 654h1v1h-1zM321 663h1v1h-1zM321 665h1v1h-1zM321 667h1v1h-1zM323 342h1v1h-1zM325 342h1v1h-1zM327 342h1v1h-1zM329 342h1v1h-1zM331 342h1v1h-1zM333 342h1v1h-1zM335 342h1v1h-1zM337 342h1v1h-1zM339 342h1v1h-1zM341 17h1v1h-1zM341 19h1v1h-1zM341 82h1v1h-1zM341 147h1v1h-1zM341 212h1v1h-1zM341 277h1v1h-1zM341 339h1v1h-1zM341 341h1v1h-1zM341 342h1v1h-1zM341 343h1v1h-1zM341 345h1v1h-1zM341 407h1v1h-1zM341 472h1v1h-1zM341 537h1v1h-1zM341 602h1v1h-1zM341 665h1v1h-1zM341 667h1v1h-1zM343 342h1v1h-1zM345 342h1v1h-1zM347 342h1v1h-1zM349 342h1v1h-1zM351 342h1v1h-1zM353 342h1v1h-1zM355 342h1v1h-1zM357 342h1v1h-1zM359 342h1v1h-1zM361 17h1v1h-1zM361 19h1v1h-1zM361 82h1v1h-1zM361 147h1v1h-1zM361 212h1v1h-1zM361 277h1v1h-1zM361 339h1v1h-1zM361 341h1v1h-1zM361 342h1v1h-1zM361 343h1v1h-1zM361 345h1v1h-1zM361 407h1v1h-1zM361 472h1v1h-1zM361 537h1v1h-1zM361 602h1v1h-1zM361 665h1v1h-1zM361 667h1v1h-1zM363 342h1v1h-1zM365 342h1v1h-1zM367 342h1v1h-1zM369 342h1v1h-1zM371 342h1v1h-1zM373 342h1v1h-1zM375 342h1v1h-1zM377 342h1v1h-1zM379 342h1v1h-1zM381 17h1v1h-1zM381 19h1v1h-1zM381 82h1v1h-1zM381 147h1v1h-1zM381 212h1v1h-1zM381 277h1v1h-1zM381 339h1v1h-1zM381 341h1v1h-1zM381 342h1v1h-1zM381 343h1v1h-1zM381 345h1v1h-1zM381 407h1v1h-1zM381 472h1v1h-1zM381 537h1v1h-1zM381 602h1v1h-1zM381 665h1v1h-1zM381 667h1v1h-1zM383 342h1v1h-1zM385 342h1v1h-1zM387 342h1v1h-1zM389 342h1v1h-1zM391 342h1v1h-1zM393 342h1v1h-1zM395 342h1v1h-1zM397 342h1v1h-1zM399 342h1v1h-1zM401 17h1v1h-1zM401 19h1v1h-1zM401 82h1v1h-1zM401 147h1v1h-1zM401 212h1v1h-1zM401 277h1v1h-1zM401 339h1v1h-1zM401 341h1v1h-1zM401 342h1v1h-1zM401 343h1v1h-1zM401 345h1v1h-1zM401 407h1v1h-1zM401 472h1v1h-1zM401 537h1v1h-1zM401 602h1v1h-1zM401 665h1v1h-1zM401 667h1v1h-1zM403 342h1v1h-1zM405 342h1v1h-1zM407 342h1v1h-1zM409 342h1v1h-1zM411 342h1v1h-1zM413 342h1v1h-1zM415 342h1v1h-1zM417 342h1v1h-1zM419 342h1v1h-1zM421 17h1v1h-1zM421 19h1v1h-1zM421 21h1v1h-1zM421 30h1v1h-1zM421 43h1v1h-1zM421 56h1v1h-1zM421 69h1v1h-1zM421 82h1v1h-1zM421 95h1v1h-1zM421 108h1v1h-1zM421 121h1v1h-1zM421 134h1v1h-1zM421 147h1v1h-1zM421 160h1v1h-1zM421 173h1v1h-1zM421 186h1v1h-1zM421 199h1v1h-1zM421 212h1v1h-1zM421 225h1v1h-1zM421 238h1v1h-1zM421 251h1v1h-1zM421 264h1v1h-1zM421 277h1v1h-1zM421 290h1v1h-1zM421 303h1v1h-1zM421 316h1v1h-1zM421 329h1v1h-1zM421 339h1v1h-1zM421 341h1v1h-1zM421 342h1v1h-1zM421 343h1v1h-1zM421 345h1v1h-1zM421 355h1v1h-1zM421 368h1v1h-1zM421 381h1v1h-1zM421 394h1v1h-1zM421 407h1v1h-1zM421 420h1v1h-1zM421 433h1v1h-1zM421 446h1v1h-1zM421 459h1v1h-1zM421 472h1v1h-1zM421 485h1v1h-1zM421 498h1v1h-1zM421 511h1v1h-1zM421 524h1v1h-1zM421 537h1v1h-1zM421 550h1v1h-1zM421 563h1v1h-1zM421 576h1v1h-1zM421 589h1v1h-1zM421 602h1v1h-1zM421 615h1v1h-1zM421 628h1v1h-1zM421 641h1v1h-1zM421 654h1v1h-1zM421 663h1v1h-1zM421 665h1v1h-1zM421 667h1v1h-1zM423 342h1v1h-1zM425 342h1v1h-1zM427 342h1v1h-1zM429 342h1v1h-1zM431 342h1v1h-1zM433 342h1v1h-1zM435 342h1v1h-1zM437 342h1v1h-1zM439 342h1v1h-1zM441 17h1v1h-1zM441 19h1v1h-1zM441 82h1v1h-1zM441 147h1v1h-1zM441 212h1v1h-1zM441 277h1v1h-1zM441 339h1v1h-1zM441 341h1v1h-1zM441 342h1v1h-1zM441 343h1v1h-1zM441 345h1v1h-1zM441 407h1v1h-1zM441 472h1v1h-1zM441 537h1v1h-1zM441 602h1v1h-1zM441 665h1v1h-1zM441 667h1v1h-1zM443 342h1v1h-1zM445 342h1v1h-1zM447 342h1v1h-1zM449 342h1v1h-1zM451 342h1v1h-1zM453 342h1v1h-1zM455 342h1v1h-1zM457 342h1v1h-1zM459 342h1v1h-1zM461 17h1v1h-1zM461 19h1v1h-1zM461 82h1v1h-1zM461 147h1v1h-1zM461 212h1v1h-1zM461 277h1v1h-1zM461 339h1v1h-1zM461 341h1v1h-1zM461 342h1v1h-1zM461 343h1v1h-1zM461 345h1v1h-1zM461 407h1v1h-1zM461 472h1v1h-1zM461 537h1v1h-1zM461 602h1v1h-1zM461 665h1v1h-1zM461 667h1v1h-1zM463 342h1v1h-1zM465 342h1v1h-1zM467 342h1v1h-1zM469 342h1v1h-1zM471 342h1v1h-1zM473 342h1v1h-1zM475 342h1v1h-1zM477 342h1v1h-1zM479 342h1v1h-1zM481 17h1v1h-1zM481 19h1v1h-1zM481 82h1v1h-1zM481 147h1v1h-1zM481 212h1v1h-1zM481 277h1v1h-1zM481 339h1v1h-1zM481 341h1v1h-1zM481 342h1v1h-1zM481 343h1v1h-1zM481 345h1v1h-1zM481 407h1v1h-1zM481 472h1v1h-1zM481 537h1v1h-1zM481 602h1v1h-1zM481 665h1v1h-1zM481 667h1v1h-1zM483 342h1v1h-1zM485 342h1v1h-1zM487 342h1v1h-1zM489 342h1v1h-1zM491 342h1v1h-1zM493 342h1v1h-1zM495 342h1v1h-1zM497 342h1v1h-1zM499 342h1v1h-1zM501 17h1v1h-1zM501 19h1v1h-1zM501 82h1v1h-1zM501 147h1v1h-1zM501 212h1v1h-1zM501 277h1v1h-1zM501 339h1v1h-1zM501 341h1v1h-1zM501 342h1v1h-1zM501 343h1v1h-1zM501 345h1v1h-1zM501 407h1v1h-1zM501 472h1v1h-1zM501 537h1v1h-1zM501 602h1v1h-1zM501 665h1v1h-1zM501 667h1v1h-1zM503 342h1v1h-1zM505 342h1v1h-1zM507 342h1v1h-1zM509 342h1v1h-1zM511 342h1v1h-1zM513 342h1v1h-1zM515 342h1v1h-1zM517 342h1v1h-1zM518 30h1v1h-1zM518 43h1v1h-1zM518 56h1v1h-1zM518 69h1v1h-1zM518 82h1v1h-1zM518 95h1v1h-1zM518 108h1v1h-1zM518 121h1v1h-1zM518 134h1v1h-1zM518 147h1v1h-1zM518 160h1v1h-1zM518 173h1v1h-1zM518 186h1v1h-1zM518 199h1v1h-1zM518 212h1v1h-1zM518 225h1v1h-1zM518 238h1v1h-1zM518 251h1v1h-1zM518 264h1v1h-1zM518 277h1v1h-1zM518 290h1v1h-1zM518 303h1v1h-1zM518 316h1v1h-1zM518 329h1v1h-1zM518 342h1v1h-1zM518 355h1v1h-1zM518 368h1v1h-1zM518 381h1v1h-1zM518 394h1v1h-1zM518 407h1v1h-1zM518 420h1v1h-1zM518 433h1v1h-1zM518 446h1v1h-1zM518 459h1v1h-1zM518 472h1v1h-1zM518 485h1v1h-1zM518 498h1v1h-1zM518 511h1v1h-1zM518 524h1v1h-1zM518 537h1v1h-1zM518 550h1v1h-1zM518 563h1v1h-1zM518 576h1v1h-1zM518 589h1v1h-1zM518 602h1v1h-1zM518 615h1v1h-1zM518 628h1v1h-1zM518 641h1v1h-1zM518 654h1v1h-1zM519 342h1v1h-1zM520 30h1v1h-1zM520 43h1v1h-1zM520 56h1v1h-1zM520 69h1v1h-1zM520 82h1v1h-1zM520 95h1v1h-1zM520 108h1v1h-1zM520 121h1v1h-1zM520 134h1v1h-1zM520 147h1v1h-1zM520 160h1v1h-1zM520 173h1v1h-1zM520 186h1v1h-1zM520 199h1v1h-1zM520 212h1v1h-1zM520 225h1v1h-1zM520 238h1v1h-1zM520 251h1v1h-1zM520 264h1v1h-1zM520 277h1v1h-1zM520 290h1v1h-1zM520 303h1v1h-1zM520 316h1v1h-1zM520 329h1v1h-1zM520 342h1v1h-1zM520 355h1v1h-1zM520 368h1v1h-1zM520 381h1v1h-1zM520 394h1v1h-1zM520 407h1v1h-1zM520 420h1v1h-1zM520 433h1v1h-1zM520 446h1v1h-1zM520 459h1v1h-1zM520 472h1v1h-1zM520 485h1v1h-1zM520 498h1v1h-1zM520 511h1v1h-1zM520 524h1v1h-1zM520 537h1v1h-1zM520 550h1v1h-1zM520 563h1v1h-1zM520 576h1v1h-1zM520 589h1v1h-1zM520 602h1v1h-1zM520 615h1v1h-1zM520 628h1v1h-1zM520 641h1v1h-1zM520 654h1v1h-1zM521 17h1v1h-1zM521 19h1v1h-1zM521 21h1v1h-1zM521 23h1v1h-1zM521 25h1v1h-1zM521 27h1v1h-1zM521 29h1v1h-1zM521 31h1v1h-1zM521 33h1v1h-1zM521 35h1v1h-1zM521 37h1v1h-1zM521 39h1v1h-1zM521 41h1v1h-1zM521 43h1v1h-1zM521 45h1v1h-1zM521 47h1v1h-1zM521 49h1v1h-1zM521 51h1v1h-1zM521 53h1v1h-1zM521 55h1v1h-1zM521 57h1v1h-1zM521 59h1v1h-1zM521 61h1v1h-1zM521 63h1v1h-1zM521 65h1v1h-1zM521 67h1v1h-1zM521 69h1v1h-1zM521 71h1v1h-1zM521 73h1v1h-1zM521 75h1v1h-1zM521 77h1v1h-1zM521 79h1v1h-1zM521 81h1v1h-1zM521 82h1v1h-1zM521 83h1v1h-1zM521 85h1v1h-1zM521 87h1v1h-1zM521 89h1v1h-1zM521 91h1v1h-1zM521 93h1v1h-1zM521 95h1v1h-1zM521 97h1v1h-1zM521 99h1v1h-1zM521 101h1v1h-1zM521 103h1v1h-1zM521 105h1v1h-1zM521 107h1v1h-1zM521 109h1v1h-1zM521 111h1v1h-1zM521 113h1v1h-1zM521 115h1v1h-1zM521 117h1v1h-1zM521 119h1v1h-1zM521 121h1v1h-1zM521 123h1v1h-1zM521 125h1v1h-1zM521 127h1v1h-1zM521 129h1v1h-1zM521 131h1v1h-1zM521 133h1v1h-1zM521 135h1v1h-1zM521 137h1v1h-1zM521 139h1v1h-1zM521 141h1v1h-1zM521 143h1v1h-1zM521 145h1v1h-1zM521 147h1v1h-1zM521 149h1v1h-1zM521 151h1v1h-1zM521 153h1v1h-1zM521 155h1v1h-1zM521 157h1v1h-1zM521 159h1v1h-1zM521 161h1v1h-1zM521 163h1v1h-1zM521 165h1v1h-1zM521 167h1v1h-1zM521 169h1v1h-1zM521 171h1v1h-1zM521 173h1v1h-1zM521 175h1v1h-1zM521 177h1v1h-1zM521 179h1v1h-1zM521 181h1v1h-1zM521 183h1v1h-1zM521 185h1v1h-1zM521 187h1v1h-1zM521 189h1v1h-1zM521 191h1v1h-1zM521 193h1v1h-1zM521 195h1v1h-1zM521 197h1v1h-1zM521 199h1v1h-1zM521 201h1v1h-1zM521 203h1v1h-1zM521 205h1v1h-1zM521 207h1v1h-1zM521 209h1v1h-1zM521 211h1v1h-1zM521 212h1v1h-1zM521 213h1v1h-1zM521 215h1v1h-1zM521 217h1v1h-1zM521 219h1v1h-1zM521 221h1v1h-1zM521 223h1v1h-1zM521 225h1v1h-1zM521 227h1v1h-1zM521 229h1v1h-1zM521 231h1v1h-1zM521 233h1v1h-1zM521 235h1v1h-1zM521 237h1v1h-1zM521 239h1v1h-1zM521 241h1v1h-1zM521 243h1v1h-1zM521 245h1v1h-1zM521 247h1v1h-1zM521 249h1v1h-1zM521 251h1v1h-1zM521 253h1v1h-1zM521 255h1v1h-1zM521 257h1v1h-1zM521 259h1v1h-1zM521 261h1v1h-1zM521 263h1v1h-1zM521 265h1v1h-1zM521 267h1v1h-1zM521 269h1v1h-1zM521 271h1v1h-1zM521 273h1v1h-1zM521 275h1v1h-1zM521 277h1v1h-1zM521 279h1v1h-1zM521 281h1v1h-1zM521 283h1v1h-1zM521 285h1v1h-1zM521 287h1v1h-1zM521 289h1v1h-1zM521 291h1v1h-1zM521 293h1v1h-1zM521 295h1v1h-1zM521 297h1v1h-1zM521 299h1v1h-1zM521 301h1v1h-1zM521 303h1v1h-1zM521 305h1v1h-1zM521 307h1v1h-1zM521 309h1v1h-1zM521 311h1v1h-1zM521 313h1v1h-1zM521 315h1v1h-1zM521 317h1v1h-1zM521 319h1v1h-1zM521 321h1v1h-1zM521 323h1v1h-1zM521 325h1v1h-1zM521 327h1v1h-1zM521 329h1v1h-1zM521 331h1v1h-1zM521 333h1v1h-1zM521 335h1v1h-1zM521 337h1v1h-1zM521 339h1v1h-1zM521 341h1v1h-1zM521 342h1v1h-1zM521 343h1v1h-1zM521 345h1v1h-1zM521 347h1v1h-1zM521 349h1v1h-1zM521 351h1v1h-1zM521 353h1v1h-1zM521 355h1v1h-1zM521 357h1v1h-1zM521 359h1v1h-1zM521 361h1v1h-1zM521 363h1v1h-1zM521 365h1v1h-1zM521 367h1v1h-1zM521 369h1v1h-1zM521 371h1v1h-1zM521 373h1v1h-1zM521 375h1v1h-1zM521 377h1v1h-1zM521 379h1v1h-1zM521 381h1v1h-1zM521 383h1v1h-1zM521 385h1v1h-1zM521 387h1v1h-1zM521 389h1v1h-1zM521 391h1v1h-1zM521 393h1v1h-1zM521 395h1v1h-1zM521 397h1v1h-1zM521 399h1v1h-1zM521 401h1v1h-1zM521 403h1v1h-1zM521 405h1v1h-1zM521 407h1v1h-1zM521 409h1v1h-1zM521 411h1v1h-1zM521 413h1v1h-1zM521 415h1v1h-1zM521 417h1v1h-1zM521 419h1v1h-1zM521 421h1v1h-1zM521 423h1v1h-1zM521 425h1v1h-1zM521 427h1v1h-1zM521 429h1v1h-1zM521 431h1v1h-1zM521 433h1v1h-1zM521 435h1v1h-1zM521 437h1v1h-1zM521 439h1v1h-1zM521 441h1v1h-1zM521 443h1v1h-1zM521 445h1v1h-1zM521 447h1v1h-1zM521 449h1v1h-1zM521 451h1v1h-1zM521 453h1v1h-1zM521 455h1v1h-1zM521 457h1v1h-1zM521 459h1v1h-1zM521 461h1v1h-1zM521 463h1v1h-1zM521 465h1v1h-1zM521 467h1v1h-1zM521 469h1v1h-1zM521 471h1v1h-1zM521 472h1v1h-1zM521 473h1v1h-1zM521 475h1v1h-1zM521 477h1v1h-1zM521 479h1v1h-1zM521 481h1v1h-1zM521 483h1v1h-1zM521 485h1v1h-1zM521 487h1v1h-1zM521 489h1v1h-1zM521 491h1v1h-1zM521 493h1v1h-1zM521 495h1v1h-1zM521 497h1v1h-1zM521 499h1v1h-1zM521 501h1v1h-1zM521 503h1v1h-1zM521 505h1v1h-1zM521 507h1v1h-1zM521 509h1v1h-1zM521 511h1v1h-1zM521 513h1v1h-1zM521 515h1v1h-1zM521 517h1v1h-1zM521 519h1v1h-1zM521 521h1v1h-1zM521 523h1v1h-1zM521 525h1v1h-1zM521 527h1v1h-1zM521 529h1v1h-1zM521 531h1v1h-1zM521 533h1v1h-1zM521 535h1v1h-1zM521 537h1v1h-1zM521 539h1v1h-1zM521 541h1v1h-1zM521 543h1v1h-1zM521 545h1v1h-1zM521 547h1v1h-1zM521 549h1v1h-1zM521 551h1v1h-1zM521 553h1v1h-1zM521 555h1v1h-1zM521 557h1v1h-1zM521 559h1v1h-1zM521 561h1v1h-1zM521 563h1v1h-1zM521 565h1v1h-1zM521 567h1v1h-1zM521 569h1v1h-1zM521 571h1v1h-1zM521 573h1v1h-1zM521 575h1v1h-1zM521 577h1v1h-1zM521 579h1v1h-1zM521 581h1v1h-1zM521 583h1v1h-1zM521 585h1v1h-1zM521 587h1v1h-1zM521 589h1v1h-1zM521 591h1v1h-1zM521 593h1v1h-1zM521 595h1v1h-1zM521 597h1v1h-1zM521 599h1v1h-1zM521 601h1v1h-1zM521 602h1v1h-1zM521 603h1v1h-1zM521 605h1v1h-1zM521 607h1v1h-1zM521 609h1v1h-1zM521 611h1v1h-1zM521 613h1v1h-1zM521 615h1v1h-1zM521 617h1v1h-1zM521 619h1v1h-1zM521 621h1v1h-1zM521 623h1v1h-1zM521 625h1v1h-1zM521 627h1v1h-1zM521 629h1v1h-1zM521 631h1v1h-1zM521 633h1v1h-1zM521 635h1v1h-1zM521 637h1v1h-1zM521 639h1v1h-1zM521 641h1v1h-1zM521 643h1v1h-1zM521 645h1v1h-1zM521 647h1v1h-1zM521 649h1v1h-1zM521 651h1v1h-1zM521 653h1v1h-1zM521 655h1v1h-1zM521 657h1v1h-1zM521 659h1v1h-1zM521 661h1v1h-1zM521 663h1v1h-1zM521 665h1v1h-1zM521 667h1v1h-1zM522 30h1v1h-1zM522 43h1v1h-1zM522 56h1v1h-1zM522 69h1v1h-1zM522 82h1v1h-1zM522 95h1v1h-1zM522 108h1v1h-1zM522 121h1v1h-1zM522 134h1v1h-1zM522 147h1v1h-1zM522 160h1v1h-1zM522 173h1v1h-1zM522 186h1v1h-1zM522 199h1v1h-1zM522 212h1v1h-1zM522 225h1v1h-1zM522 238h1v1h-1zM522 251h1v1h-1zM522 264h1v1h-1zM522 277h1v1h-1zM522 290h1v1h-1zM522 303h1v1h-1zM522 316h1v1h-1zM522 329h1v1h-1zM522 342h1v1h-1zM522 355h1v1h-1zM522 368h1v1h-1zM522 381h1v1h-1zM522 394h1v1h-1zM522 407h1v1h-1zM522 420h1v1h-1zM522 433h1v1h-1zM522 446h1v1h-1zM522 459h1v1h-1zM522 472h1v1h-1zM522 485h1v1h-1zM522 498h1v1h-1zM522 511h1v1h-1zM522 524h1v1h-1zM522 537h1v1h-1zM522 550h1v1h-1zM522 563h1v1h-1zM522 576h1v1h-1zM522 589h1v1h-1zM522 602h1v1h-1zM522 615h1v1h-1zM522 628h1v1h-1zM522 641h1v1h-1zM522 654h1v1h-1zM523 342h1v1h-1zM524 30h1v1h-1zM524 43h1v1h-1zM524 56h1v1h-1zM524 69h1v1h-1zM524 82h1v1h-1zM524 95h1v1h-1zM524 108h1v1h-1zM524 121h1v1h-1zM524 134h1v1h-1zM524 147h1v1h-1zM524 160h1v1h-1zM524 173h1v1h-1zM524 186h1v1h-1zM524 199h1v1h-1zM524 212h1v1h-1zM524 225h1v1h-1zM524 238h1v1h-1zM524 251h1v1h-1zM524 264h1v1h-1zM524 277h1v1h-1zM524 290h1v1h-1zM524 303h1v1h-1zM524 316h1v1h-1zM524 329h1v1h-1zM524 342h1v1h-1zM524 355h1v1h-1zM524 368h1v1h-1zM524 381h1v1h-1zM524 394h1v1h-1zM524 407h1v1h-1zM524 420h1v1h-1zM524 433h1v1h-1zM524 446h1v1h-1zM524 459h1v1h-1zM524 472h1v1h-1zM524 485h1v1h-1zM524 498h1v1h-1zM524 511h1v1h-1zM524 524h1v1h-1zM524 537h1v1h-1zM524 550h1v1h-1zM524 563h1v1h-1zM524 576h1v1h-1zM524 589h1v1h-1zM524 602h1v1h-1zM524 615h1v1h-1zM524 628h1v1h-1zM524 641h1v1h-1zM524 654h1v1h-1zM525 342h1v1h-1zM527 342h1v1h-1zM529 342h1v1h-1zM531 342h1v1h-1zM533 342h1v1h-1zM535 342h1v1h-1zM537 342h1v1h-1zM539 342h1v1h-1zM541 17h1v1h-1zM541 19h1v1h-1zM541 82h1v1h-1zM541 147h1v1h-1zM541 212h1v1h-1zM541 277h1v1h-1zM541 339h1v1h-1zM541 341h1v1h-1zM541 342h1v1h-1zM541 343h1v1h-1zM541 345h1v1h-1zM541 407h1v1h-1zM541 472h1v1h-1zM541 537h1v1h-1zM541 602h1v1h-1zM541 665h1v1h-1zM541 667h1v1h-1zM543 342h1v1h-1zM545 342h1v1h-1zM547 342h1v1h-1zM549 342h1v1h-1zM551 342h1v1h-1zM553 342h1v1h-1zM555 342h1v1h-1zM557 342h1v1h-1zM559 342h1v1h-1zM561 17h1v1h-1zM561 19h1v1h-1zM561 82h1v1h-1zM561 147h1v1h-1zM561 212h1v1h-1zM561 277h1v1h-1zM561 339h1v1h-1zM561 341h1v1h-1zM561 342h1v1h-1zM561 343h1v1h-1zM561 345h1v1h-1zM561 407h1v1h-1zM561 472h1v1h-1zM561 537h1v1h-1zM561 602h1v1h-1zM561 665h1v1h-1zM561 667h1v1h-1zM563 342h1v1h-1zM565 342h1v1h-1zM567 342h1v1h-1zM569 342h1v1h-1zM571 342h1v1h-1zM573 342h1v1h-1zM575 342h1v1h-1zM577 342h1v1h-1zM579 342h1v1h-1zM581 17h1v1h-1zM581 19h1v1h-1zM581 82h1v1h-1zM581 147h1v1h-1zM581 212h1v1h-1zM581 277h1v1h-1zM581 339h1v1h-1zM581 341h1v1h-1zM581 342h1v1h-1zM581 343h1v1h-1zM581 345h1v1h-1zM581 407h1v1h-1zM581 472h1v1h-1zM581 537h1v1h-1zM581 602h1v1h-1zM581 665h1v1h-1zM581 667h1v1h-1zM583 342h1v1h-1zM585 342h1v1h-1zM587 342h1v1h-1zM589 342h1v1h-1zM591 342h1v1h-1zM593 342h1v1h-1zM595 342h1v1h-1zM597 342h1v1h-1zM599 342h1v1h-1zM601 17h1v1h-1zM601 19h1v1h-1zM601 82h1v1h-1zM601 147h1v1h-1zM601 212h1v1h-1zM601 277h1v1h-1zM601 339h1v1h-1zM601 341h1v1h-1zM601 342h1v1h-1zM601 343h1v1h-1zM601 345h1v1h-1zM601 407h1v1h-1zM601 472h1v1h-1zM601 537h1v1h-1zM601 602h1v1h-1zM601 665h1v1h-1zM601 667h1v1h-1zM603 342h1v1h-1zM605 342h1v1h-1zM607 342h1v1h-1zM609 342h1v1h-1zM611 342h1v1h-1zM613 342h1v1h-1zM615 342h1v1h-1zM617 342h1v1h-1zM619 342h1v1h-1zM621 17h1v1h-1zM621 19h1v1h-1zM621 21h1v1h-1zM621 30h1v1h-1zM621 43h1v1h-1zM621 56h1v1h-1zM621 69h1v1h-1zM621 82h1v1h-1zM621 95h1v1h-1zM621 108h1v1h-1zM621 121h1v1h-1zM621 134h1v1h-1zM621 147h1v1h-1zM621 160h1v1h-1zM621 173h1v1h-1zM621 186h1v1h-1zM621 199h1v1h-1zM621 212h1v1h-1zM621 225h1v1h-1zM621 238h1v1h-1zM621 251h1v1h-1zM621 264h1v1h-1zM621 277h1v1h-1zM621 290h1v1h-1zM621 303h1v1h-1zM621 316h1v1h-1zM621 329h1v1h-1zM621 339h1v1h-1zM621 341h1v1h-1zM621 342h1v1h-1zM621 343h1v1h-1zM621 345h1v1h-1zM621 355h1v1h-1zM621 368h1v1h-1zM621 381h1v1h-1zM621 394h1v1h-1zM621 407h1v1h-1zM621 420h1v1h-1zM621 433h1v1h-1zM621 446h1v1h-1zM621 459h1v1h-1zM621 472h1v1h-1zM621 485h1v1h-1zM621 498h1v1h-1zM621 511h1v1h-1zM621 524h1v1h-1zM621 537h1v1h-1zM621 550h1v1h-1zM621 563h1v1h-1zM621 576h1v1h-1zM621 589h1v1h-1zM621 602h1v1h-1zM621 615h1v1h-1zM621 628h1v1h-1zM621 641h1v1h-1zM621 654h1v1h-1zM621 663h1v1h-1zM621 665h1v1h-1zM621 667h1v1h-1zM623 342h1v1h-1zM625 342h1v1h-1zM627 342h1v1h-1zM629 342h1v1h-1zM631 342h1v1h-1zM633 342h1v1h-1zM635 342h1v1h-1zM637 342h1v1h-1zM639 342h1v1h-1zM641 17h1v1h-1zM641 19h1v1h-1zM641 82h1v1h-1zM641 147h1v1h-1zM641 212h1v1h-1zM641 277h1v1h-1zM641 339h1v1h-1zM641 341h1v1h-1zM641 342h1v1h-1zM641 343h1v1h-1zM641 345h1v1h-1zM641 407h1v1h-1zM641 472h1v1h-1zM641 537h1v1h-1zM641 602h1v1h-1zM641 665h1v1h-1zM641 667h1v1h-1zM643 342h1v1h-1zM645 342h1v1h-1zM647 342h1v1h-1zM649 342h1v1h-1zM651 342h1v1h-1zM653 342h1v1h-1zM655 342h1v1h-1zM657 342h1v1h-1zM659 342h1v1h-1zM661 17h1v1h-1zM661 19h1v1h-1zM661 82h1v1h-1zM661 147h1v1h-1zM661 212h1v1h-1zM661 277h1v1h-1zM661 339h1v1h-1zM661 341h1v1h-1zM661 342h1v1h-1zM661 343h1v1h-1zM661 345h1v1h-1zM661 407h1v1h-1zM661 472h1v1h-1zM661 537h1v1h-1zM661 602h1v1h-1zM661 665h1v1h-1zM661 667h1v1h-1zM663 342h1v1h-1zM665 342h1v1h-1zM667 342h1v1h-1zM669 342h1v1h-1zM671 342h1v1h-1zM673 342h1v1h-1zM675 342h1v1h-1zM677 342h1v1h-1zM679 342h1v1h-1zM681 17h1v1h-1zM681 19h1v1h-1zM681 82h1v1h-1zM681 147h1v1h-1zM681 212h1v1h-1zM681 277h1v1h-1zM681 339h1v1h-1zM681 341h1v1h-1zM681 342h1v1h-1zM681 343h1v1h-1zM681 345h1v1h-1zM681 407h1v1h-1zM681 472h1v1h-1zM681 537h1v1h-1zM681 602h1v1h-1zM681 665h1v1h-1zM681 667h1v1h-1zM683 342h1v1h-1zM685 342h1v1h-1zM687 342h1v1h-1zM689 342h1v1h-1zM691 342h1v1h-1zM693 342h1v1h-1zM695 342h1v1h-1zM697 342h1v1h-1zM699 342h1v1h-1zM701 17h1v1h-1zM701 19h1v1h-1zM701 82h1v1h-1zM701 147h1v1h-1zM701 212h1v1h-1zM701 277h1v1h-1zM701 339h1v1h-1zM701 341h1v1h-1zM701 342h1v1h-1zM701 343h1v1h-1zM701 345h1v1h-1zM701 407h1v1h-1zM701 472h1v1h-1zM701 537h1v1h-1zM701 602h1v1h-1zM701 665h1v1h-1zM701 667h1v1h-1zM703 342h1v1h-1zM705 342h1v1h-1zM707 342h1v1h-1zM709 342h1v1h-1zM711 342h1v1h-1zM713 342h1v1h-1zM715 342h1v1h-1zM717 342h1v1h-1zM719 342h1v1h-1zM721 17h1v1h-1zM721 19h1v1h-1zM721 21h1v1h-1zM721 30h1v1h-1zM721 43h1v1h-1zM721 56h1v1h-1zM721 69h1v1h-1zM721 82h1v1h-1zM721 95h1v1h-1zM721 108h1v1h-1zM721 121h1v1h-1zM721 134h1v1h-1zM721 147h1v1h-1zM721 160h1v1h-1zM721 173h1v1h-1zM721 186h1v1h-1zM721 199h1v1h-1zM721 212h1v1h-1zM721 225h1v1h-1zM721 238h1v1h-1zM721 251h1v1h-1zM721 264h1v1h-1zM721 277h1v1h-1zM721 290h1v1h-1zM721 303h1v1h-1zM721 316h1v1h-1zM721 329h1v1h-1zM721 339h1v1h-1zM721 341h1v1h-1zM721 342h1v1h-1zM721 343h1v1h-1zM721 345h1v1h-1zM721 355h1v1h-1zM721 368h1v1h-1zM721 381h1v1h-1zM721 394h1v1h-1zM721 407h1v1h-1zM721 420h1v1h-1zM721 433h1v1h-1zM721 446h1v1h-1zM721 459h1v1h-1zM721 472h1v1h-1zM721 485h1v1h-1zM721 498h1v1h-1zM721 511h1v1h-1zM721 524h1v1h-1zM721 537h1v1h-1zM721 550h1v1h-1zM721 563h1v1h-1zM721 576h1v1h-1zM721 589h1v1h-1zM721 602h1v1h-1zM721 615h1v1h-1zM721 628h1v1h-1zM721 641h1v1h-1zM721 654h1v1h-1zM721 663h1v1h-1zM721 665h1v1h-1zM721 667h1v1h-1zM723 342h1v1h-1zM725 342h1v1h-1zM727 342h1v1h-1zM729 342h1v1h-1zM731 342h1v1h-1zM733 342h1v1h-1zM735 342h1v1h-1zM737 342h1v1h-1zM739 342h1v1h-1zM741 17h1v1h-1zM741 19h1v1h-1zM741 82h1v1h-1zM741 147h1v1h-1zM741 212h1v1h-1zM741 277h1v1h-1zM741 339h1v1h-1zM741 341h1v1h-1zM741 342h1v1h-1zM741 343h1v1h-1zM741 345h1v1h-1zM741 407h1v1h-1zM741 472h1v1h-1zM741 537h1v1h-1zM741 602h1v1h-1zM741 665h1v1h-1zM741 667h1v1h-1zM743 342h1v1h-1zM745 342h1v1h-1zM747 342h1v1h-1zM749 342h1v1h-1zM751 342h1v1h-1zM753 342h1v1h-1zM755 342h1v1h-1zM757 342h1v1h-1zM759 342h1v1h-1zM761 17h1v1h-1zM761 19h1v1h-1zM761 82h1v1h-1zM761 147h1v1h-1zM761 212h1v1h-1zM761 277h1v1h-1zM761 339h1v1h-1zM761 341h1v1h-1zM761 342h1v1h-1zM761 343h1v1h-1zM761 345h1v1h-1zM761 407h1v1h-1zM761 472h1v1h-1zM761 537h1v1h-1zM761 602h1v1h-1zM761 665h1v1h-1zM761 667h1v1h-1zM763 342h1v1h-1zM765 342h1v1h-1zM767 342h1v1h-1zM769 342h1v1h-1zM771 342h1v1h-1zM773 342h1v1h-1zM775 342h1v1h-1zM777 342h1v1h-1zM779 342h1v1h-1zM781 17h1v1h-1zM781 19h1v1h-1zM781 82h1v1h-1zM781 147h1v1h-1zM781 212h1v1h-1zM781 277h1v1h-1zM781 339h1v1h-1zM781 341h1v1h-1zM781 342h1v1h-1zM781 343h1v1h-1zM781 345h1v1h-1zM781 407h1v1h-1zM781 472h1v1h-1zM781 537h1v1h-1zM781 602h1v1h-1zM781 665h1v1h-1zM781 667h1v1h-1zM783 342h1v1h-1zM785 342h1v1h-1zM787 342h1v1h-1zM789 342h1v1h-1zM791 342h1v1h-1zM793 342h1v1h-1zM795 342h1v1h-1zM797 342h1v1h-1zM799 342h1v1h-1zM801 17h1v1h-1zM801 19h1v1h-1zM801 82h1v1h-1zM801 147h1v1h-1zM801 212h1v1h-1zM801 277h1v1h-1zM801 339h1v1h-1zM801 341h1v1h-1zM801 342h1v1h-1zM801 343h1v1h-1zM801 345h1v1h-1zM801 407h1v1h-1zM801 472h1v1h-1zM801 537h1v1h-1zM801 602h1v1h-1zM801 665h1v1h-1zM801 667h1v1h-1zM803 342h1v1h-1zM805 342h1v1h-1zM807 342h1v1h-1zM809 342h1v1h-1zM811 342h1v1h-1zM813 342h1v1h-1zM815 342h1v1h-1zM817 342h1v1h-1zM819 342h1v1h-1zM821 17h1v1h-1zM821 19h1v1h-1zM821 21h1v1h-1zM821 30h1v1h-1zM821 43h1v1h-1zM821 56h1v1h-1zM821 69h1v1h-1zM821 82h1v1h-1zM821 95h1v1h-1zM821 108h1v1h-1zM821 121h1v1h-1zM821 134h1v1h-1zM821 147h1v1h-1zM821 160h1v1h-1zM821 173h1v1h-1zM821 186h1v1h-1zM821 199h1v1h-1zM821 212h1v1h-1zM821 225h1v1h-1zM821 238h1v1h-1zM821 251h1v1h-1zM821 264h1v1h-1zM821 277h1v1h-1zM821 290h1v1h-1zM821 303h1v1h-1zM821 316h1v1h-1zM821 329h1v1h-1zM821 339h1v1h-1zM821 341h1v1h-1zM821 342h1v1h-1zM821 343h1v1h-1zM821 345h1v1h-1zM821 355h1v1h-1zM821 368h1v1h-1zM821 381h1v1h-1zM821 394h1v1h-1zM821 407h1v1h-1zM821 420h1v1h-1zM821 433h1v1h-1zM821 446h1v1h-1zM821 459h1v1h-1zM821 472h1v1h-1zM821 485h1v1h-1zM821 498h1v1h-1zM821 511h1v1h-1zM821 524h1v1h-1zM821 537h1v1h-1zM821 550h1v1h-1zM821 563h1v1h-1zM821 576h1v1h-1zM821 589h1v1h-1zM821 602h1v1h-1zM821 615h1v1h-1zM821 628h1v1h-1zM821 641h1v1h-1zM821 654h1v1h-1zM821 663h1v1h-1zM821 665h1v1h-1zM821 667h1v1h-1zM823 342h1v1h-1zM825 342h1v1h-1zM827 342h1v1h-1zM829 342h1v1h-1zM831 342h1v1h-1zM833 342h1v1h-1zM835 342h1v1h-1zM837 342h1v1h-1zM839 342h1v1h-1zM841 17h1v1h-1zM841 19h1v1h-1zM841 82h1v1h-1zM841 147h1v1h-1zM841 212h1v1h-1zM841 277h1v1h-1zM841 339h1v1h-1zM841 341h1v1h-1zM841 342h1v1h-1zM841 343h1v1h-1zM841 345h1v1h-1zM841 407h1v1h-1zM841 472h1v1h-1zM841 537h1v1h-1zM841 602h1v1h-1zM841 665h1v1h-1zM841 667h1v1h-1zM843 342h1v1h-1zM845 342h1v1h-1zM847 342h1v1h-1zM849 342h1v1h-1zM851 342h1v1h-1zM853 342h1v1h-1zM855 342h1v1h-1zM857 342h1v1h-1zM859 342h1v1h-1zM861 17h1v1h-1zM861 19h1v1h-1zM861 82h1v1h-1zM861 147h1v1h-1zM861 212h1v1h-1zM861 277h1v1h-1zM861 339h1v1h-1zM861 341h1v1h-1zM861 342h1v1h-1zM861 343h1v1h-1zM861 345h1v1h-1zM861 407h1v1h-1zM861 472h1v1h-1zM861 537h1v1h-1zM861 602h1v1h-1zM861 665h1v1h-1zM861 667h1v1h-1zM863 342h1v1h-1zM865 342h1v1h-1zM867 342h1v1h-1zM869 342h1v1h-1zM871 342h1v1h-1zM873 342h1v1h-1zM875 342h1v1h-1zM877 342h1v1h-1zM879 342h1v1h-1zM881 17h1v1h-1zM881 19h1v1h-1zM881 82h1v1h-1zM881 147h1v1h-1zM881 212h1v1h-1zM881 277h1v1h-1zM881 339h1v1h-1zM881 341h1v1h-1zM881 342h1v1h-1zM881 343h1v1h-1zM881 345h1v1h-1zM881 407h1v1h-1zM881 472h1v1h-1zM881 537h1v1h-1zM881 602h1v1h-1zM881 665h1v1h-1zM881 667h1v1h-1zM883 342h1v1h-1zM885 342h1v1h-1zM887 342h1v1h-1zM889 342h1v1h-1zM891 342h1v1h-1zM893 342h1v1h-1zM895 342h1v1h-1zM897 342h1v1h-1zM899 342h1v1h-1zM901 17h1v1h-1zM901 19h1v1h-1zM901 82h1v1h-1zM901 147h1v1h-1zM901 212h1v1h-1zM901 277h1v1h-1zM901 339h1v1h-1zM901 341h1v1h-1zM901 342h1v1h-1zM901 343h1v1h-1zM901 345h1v1h-1zM901 407h1v1h-1zM901 472h1v1h-1zM901 537h1v1h-1zM901 602h1v1h-1zM901 665h1v1h-1zM901 667h1v1h-1zM903 342h1v1h-1zM905 342h1v1h-1zM907 342h1v1h-1zM909 342h1v1h-1zM911 342h1v1h-1zM913 342h1v1h-1zM915 342h1v1h-1zM917 342h1v1h-1zM919 342h1v1h-1zM921 17h1v1h-1zM921 19h1v1h-1zM921 21h1v1h-1zM921 30h1v1h-1zM921 43h1v1h-1zM921 56h1v1h-1zM921 69h1v1h-1zM921 82h1v1h-1zM921 95h1v1h-1zM921 108h1v1h-1zM921 121h1v1h-1zM921 134h1v1h-1zM921 147h1v1h-1zM921 160h1v1h-1zM921 173h1v1h-1zM921 186h1v1h-1zM921 199h1v1h-1zM921 212h1v1h-1zM921 225h1v1h-1zM921 238h1v1h-1zM921 251h1v1h-1zM921 264h1v1h-1zM921 277h1v1h-1zM921 290h1v1h-1zM921 303h1v1h-1zM921 316h1v1h-1zM921 329h1v1h-1zM921 339h1v1h-1zM921 341h1v1h-1zM921 342h1v1h-1zM921 343h1v1h-1zM921 345h1v1h-1zM921 355h1v1h-1zM921 368h1v1h-1zM921 381h1v1h-1zM921 394h1v1h-1zM921 407h1v1h-1zM921 420h1v1h-1zM921 433h1v1h-1zM921 446h1v1h-1zM921 459h1v1h-1zM921 472h1v1h-1zM921 485h1v1h-1zM921 498h1v1h-1zM921 511h1v1h-1zM921 524h1v1h-1zM921 537h1v1h-1zM921 550h1v1h-1zM921 563h1v1h-1zM921 576h1v1h-1zM921 589h1v1h-1zM921 602h1v1h-1zM921 615h1v1h-1zM921 628h1v1h-1zM921 641h1v1h-1zM921 654h1v1h-1zM921 663h1v1h-1zM921 665h1v1h-1zM921 667h1v1h-1zM923 342h1v1h-1zM925 342h1v1h-1zM927 342h1v1h-1zM929 342h1v1h-1zM931 342h1v1h-1zM933 342h1v1h-1zM935 342h1v1h-1zM937 342h1v1h-1zM939 342h1v1h-1zM941 17h1v1h-1zM941 19h1v1h-1zM941 82h1v1h-1zM941 147h1v1h-1zM941 212h1v1h-1zM941 277h1v1h-1zM941 339h1v1h-1zM941 341h1v1h-1zM941 342h1v1h-1zM941 343h1v1h-1zM941 345h1v1h-1zM941 407h1v1h-1zM941 472h1v1h-1zM941 537h1v1h-1zM941 602h1v1h-1zM941 665h1v1h-1zM941 667h1v1h-1zM943 342h1v1h-1zM945 342h1v1h-1zM947 342h1v1h-1zM949 342h1v1h-1zM951 342h1v1h-1zM953 342h1v1h-1zM955 342h1v1h-1zM957 342h1v1h-1zM959 342h1v1h-1zM961 17h1v1h-1zM961 19h1v1h-1zM961 82h1v1h-1zM961 147h1v1h-1zM961 212h1v1h-1zM961 277h1v1h-1zM961 339h1v1h-1zM961 341h1v1h-1zM961 342h1v1h-1zM961 343h1v1h-1zM961 345h1v1h-1zM961 407h1v1h-1zM961 472h1v1h-1zM961 537h1v1h-1zM961 602h1v1h-1zM961 665h1v1h-1zM961 667h1v1h-1zM963 342h1v1h-1zM965 342h1v1h-1zM967 342h1v1h-1zM969 342h1v1h-1zM971 342h1v1h-1zM973 342h1v1h-1zM975 342h1v1h-1zM977 342h1v1h-1zM979 342h1v1h-1zM981 17h1v1h-1zM981 19h1v1h-1zM981 82h1v1h-1zM981 147h1v1h-1zM981 212h1v1h-1zM981 277h1v1h-1zM981 339h1v1h-1zM981 341h1v1h-1zM981 342h1v1h-1zM981 343h1v1h-1zM981 345h1v1h-1zM981 407h1v1h-1zM981 472h1v1h-1zM981 537h1v1h-1zM981 602h1v1h-1zM981 665h1v1h-1zM981 667h1v1h-1zM983 342h1v1h-1zM985 342h1v1h-1zM987 342h1v1h-1zM989 342h1v1h-1zM991 342h1v1h-1zM993 342h1v1h-1zM995 342h1v1h-1zM997 342h1v1h-1zM999 342h1v1h-1zM1001 17h1v1h-1zM1001 19h1v1h-1zM1001 82h1v1h-1zM1001 147h1v1h-1zM1001 212h1v1h-1zM1001 277h1v1h-1zM1001 339h1v1h-1zM1001 341h1v1h-1zM1001 342h1v1h-1zM1001 343h1v1h-1zM1001 345h1v1h-1zM1001 407h1v1h-1zM1001 472h1v1h-1zM1001 537h1v1h-1zM1001 602h1v1h-1zM1001 665h1v1h-1zM1001 667h1v1h-1zM1003 342h1v1h-1zM1005 342h1v1h-1zM1007 342h1v1h-1zM1009 342h1v1h-1zM1011 342h1v1h-1zM1013 342h1v1h-1zM1015 342h1v1h-1zM1016 82h1v1h-1zM1016 147h1v1h-1zM1016 212h1v1h-1zM1016 277h1v1h-1zM1016 342h1v1h-1zM1016 407h1v1h-1zM1016 472h1v1h-1zM1016 537h1v1h-1zM1016 602h1v1h-1zM1017 342h1v1h-1zM1018 30h1v1h-1zM1018 43h1v1h-1zM1018 56h1v1h-1zM1018 69h1v1h-1zM1018 82h1v1h-1zM1018 95h1v1h-1zM1018 108h1v1h-1zM1018 121h1v1h-1zM1018 134h1v1h-1zM1018 147h1v1h-1zM1018 160h1v1h-1zM1018 173h1v1h-1zM1018 186h1v1h-1zM1018 199h1v1h-1zM1018 212h1v1h-1zM1018 225h1v1h-1zM1018 238h1v1h-1zM1018 251h1v1h-1zM1018 264h1v1h-1zM1018 277h1v1h-1zM1018 290h1v1h-1zM1018 303h1v1h-1zM1018 316h1v1h-1zM1018 329h1v1h-1zM1018 342h1v1h-1zM1018 355h1v1h-1zM1018 368h1v1h-1zM1018 381h1v1h-1zM1018 394h1v1h-1zM1018 407h1v1h-1zM1018 420h1v1h-1zM1018 433h1v1h-1zM1018 446h1v1h-1zM1018 459h1v1h-1zM1018 472h1v1h-1zM1018 485h1v1h-1zM1018 498h1v1h-1zM1018 511h1v1h-1zM1018 524h1v1h-1zM1018 537h1v1h-1zM1018 550h1v1h-1zM1018 563h1v1h-1zM1018 576h1v1h-1zM1018 589h1v1h-1zM1018 602h1v1h-1zM1018 615h1v1h-1zM1018 628h1v1h-1zM1018 641h1v1h-1zM1018 654h1v1h-1zM1019 342h1v1h-1zM1020 30h1v1h-1zM1020 43h1v1h-1zM1020 56h1v1h-1zM1020 69h1v1h-1zM1020 82h1v1h-1zM1020 95h1v1h-1zM1020 108h1v1h-1zM1020 121h1v1h-1zM1020 134h1v1h-1zM1020 147h1v1h-1zM1020 160h1v1h-1zM1020 173h1v1h-1zM1020 186h1v1h-1zM1020 199h1v1h-1zM1020 212h1v1h-1zM1020 225h1v1h-1zM1020 238h1v1h-1zM1020 251h1v1h-1zM1020 264h1v1h-1zM1020 277h1v1h-1zM1020 290h1v1h-1zM1020 303h1v1h-1zM1020 316h1v1h-1zM1020 329h1v1h-1zM1020 342h1v1h-1zM1020 355h1v1h-1zM1020 368h1v1h-1zM1020 381h1v1h-1zM1020 394h1v1h-1zM1020 407h1v1h-1zM1020 420h1v1h-1zM1020 433h1v1h-1zM1020 446h1v1h-1zM1020 459h1v1h-1zM1020 472h1v1h-1zM1020 485h1v1h-1zM1020 498h1v1h-1zM1020 511h1v1h-1zM1020 524h1v1h-1zM1020 537h1v1h-1zM1020 550h1v1h-1zM1020 563h1v1h-1zM1020 576h1v1h-1zM1020 589h1v1h-1zM1020 602h1v1h-1zM1020 615h1v1h-1zM1020 628h1v1h-1zM1020 641h1v1h-1zM1020 654h1v1h-1zM1021 82h1v1h-1zM1021 147h1v1h-1zM1021 212h1v1h-1zM1021 277h1v1h-1zM1021 342h1v1h-1zM1021 407h1v1h-1zM1021 472h1v1h-1zM1021 537h1v1h-1zM1021 602h1v1h-1z" fill="#e0e0e0"/><path d="M1 73H13V75H1ZM1 88H13V90H1ZM0 74H1V89H0Z" fill="#ff40ff"/><path d="M13 73.5L20 81.5L13 89.5" fill="none" stroke="#ff40ff" stroke-width="1.4" shape-rendering="auto"/><text x="8" y="87" text-anchor="middle" fill="#c000c0" font-family="Liberation Sans" font-size="15">3</text><polygon points="0,334 13,334 20,342 13,350 0,350" fill="#00a800" stroke="#30e030" stroke-width="1" shape-rendering="auto"/><text x="8" y="347.5" text-anchor="middle" fill="#000" stroke="#000" stroke-width="0.6" font-family="Liberation Sans" font-size="15">4</text><path d="M1 594H13V596H1ZM1 609H13V611H1ZM0 595H1V610H0Z" fill="#00f0f0"/><path d="M13 594.5L20 602.5L13 610.5" fill="none" stroke="#00f0f0" stroke-width="1.4" shape-rendering="auto"/><text x="8" y="608" text-anchor="middle" fill="#00f0f0" font-family="Liberation Sans" font-size="15">2</text><path d="M1 655H13V657H1ZM1 670H13V672H1ZM0 656H1V671H0Z" fill="#f0f000"/><path d="M13 655.5L20 663.5L13 671.5" fill="none" stroke="#f0f000" stroke-width="1.4" shape-rendering="auto"/><text x="8" y="669" text-anchor="middle" fill="#f0f000" font-family="Liberation Sans" font-size="15">1</text><circle cx="34" cy="439" r="8" fill="#ff4a00" shape-rendering="auto"/><text x="34" y="444" text-anchor="middle" fill="#200800" font-family="Liberation Sans" font-size="15">a</text><circle cx="34" cy="489" r="8" fill="#ff4a00" shape-rendering="auto"/><text x="34" y="494" text-anchor="middle" fill="#200800" font-family="Liberation Sans" font-size="15">b</text><path d="M356 24H366L367 26V36L364 38L361 40L358 38L355 36V26Z" fill="#ff9a00" shape-rendering="auto"/><path d="M356 25H366V27H362V36H360V27H356Z" fill="#000"/><path d="M514 1H517V3H516V13H517V15H514Z" fill="#fff"/><path d="M526 1H529V15H526V13H527V3H526Z" fill="#fff"/><path d="M518 1H525L521.5 5Z" fill="#ff9a00" shape-rendering="auto"/><path d="M516 5H523V16H516Z" fill="#ff9a00"/><path d="M517 6H522V7H520V15H518V7H517Z" fill="#000"/><path d="M516 17H527L521.5 23Z" fill="#ff9a00" shape-rendering="auto"/><path d="M1009 616.5L1015 611V615H1021V618H1015V622Z" fill="#f0f000" shape-rendering="auto"/><rect x="708.5" y="40.5" width="301" height="59" rx="6" fill="#030503" stroke="#e0e0e8" shape-rendering="auto"/><path d="M727.5 44.5H741.5V58.5H727.5Z" fill="none" stroke="#00b000"/><circle cx="734.5" cy="71.5" r="7" fill="none" stroke="#00b000" shape-rendering="auto"/><circle cx="886" cy="52" r="8" fill="#ff4a00" shape-rendering="auto"/><text x="886" y="57" text-anchor="middle" fill="#200800" font-family="Liberation Sans" font-size="15">a</text><circle cx="886" cy="71" r="8" fill="#ff4a00" shape-rendering="auto"/><text x="886" y="76" text-anchor="middle" fill="#200800" font-family="Liberation Sans" font-size="15">b</text><rect x="20.5" y="670.5" width="553.0" height="20.0" rx="7" fill="none" stroke="#d8d8d8" shape-rendering="auto"/><rect x="582.5" y="670.5" width="147.0" height="37.0" rx="7" fill="none" stroke="#d8d8d8" shape-rendering="auto"/><rect x="737.5" y="670.5" width="106.0" height="37.0" rx="7" fill="none" stroke="#d8d8d8" shape-rendering="auto"/><rect x="850.5" y="670.5" width="171.0" height="38.0" rx="7" fill="none" stroke="#d8d8d8" shape-rendering="auto"/><rect x="909.5" y="729.5" width="112.0" height="36.0" rx="7" fill="none" stroke="#d8d8d8" shape-rendering="auto"/><rect x="25" y="673" width="26" height="16" rx="8.0" fill="#f0f000" shape-rendering="auto"/><text x="38.0" y="686.5" text-anchor="middle" fill="#000" stroke="#000" stroke-width="0.6" font-family="Liberation Sans" font-size="16">1</text><rect x="165" y="673" width="25" height="16" rx="8.0" fill="#00e0e8" shape-rendering="auto"/><text x="177.5" y="686.5" text-anchor="middle" fill="#000" stroke="#000" stroke-width="0.6" font-family="Liberation Sans" font-size="16">2</text><rect x="304" y="673" width="25" height="16" rx="8.0" fill="#a000b0" shape-rendering="auto"/><text x="316.5" y="686.5" text-anchor="middle" fill="#000" stroke="#000" stroke-width="0.6" font-family="Liberation Sans" font-size="16">3</text><rect x="443" y="673" width="25" height="16" rx="8.0" fill="#00a000" shape-rendering="auto"/><text x="455.5" y="686.5" text-anchor="middle" fill="#000" stroke="#000" stroke-width="0.6" font-family="Liberation Sans" font-size="16">4</text><rect x="882" y="673" width="25" height="16" rx="8.0" fill="#f0f000" shape-rendering="auto"/><text x="894.5" y="686.5" text-anchor="middle" fill="#000" stroke="#000" stroke-width="0.6" font-family="Liberation Sans" font-size="16">1</text><text x="144" y="681.5" fill="#f0f000" font-family="Liberation Sans" font-size="8.5" textLength="5" lengthAdjust="spacingAndGlyphs">B</text><text x="148.3" y="686" fill="#f0f000" font-family="Liberation Sans" font-size="8.5" textLength="5.5" lengthAdjust="spacingAndGlyphs">W</text><text x="283" y="681.5" fill="#00e8f0" font-family="Liberation Sans" font-size="8.5" textLength="5" lengthAdjust="spacingAndGlyphs">B</text><text x="287.3" y="686" fill="#00e8f0" font-family="Liberation Sans" font-size="8.5" textLength="5.5" lengthAdjust="spacingAndGlyphs">W</text><text x="421" y="681.5" fill="#b000c0" font-family="Liberation Sans" font-size="8.5" textLength="5" lengthAdjust="spacingAndGlyphs">B</text><text x="425.3" y="686" fill="#b000c0" font-family="Liberation Sans" font-size="8.5" textLength="5.5" lengthAdjust="spacingAndGlyphs">W</text><text x="561" y="681.5" fill="#00b000" font-family="Liberation Sans" font-size="8.5" textLength="5" lengthAdjust="spacingAndGlyphs">B</text><text x="565.3" y="686" fill="#00b000" font-family="Liberation Sans" font-size="8.5" textLength="5.5" lengthAdjust="spacingAndGlyphs">W</text><path d="M200 675H201.5V682H200Z" fill="#00e8f0"/><path d="M197 680.5H204.5L200.75 686.5Z" fill="#00e8f0" shape-rendering="auto"/><path d="M920 685H925L929 676H933" fill="none" stroke="#f4f4ff" stroke-width="2" shape-rendering="auto"/><rect x="587" y="691" width="12" height="13" rx="2" fill="#ff9a00" shape-rendering="auto"/><path d="M589 693H597V695H594V702H592V695H589Z" fill="#000"/><path d="M600 697H606V698H600Z" fill="#ff9a00"/><path d="M605 694L609.5 697.5L605 701Z" fill="#ff9a00" shape-rendering="auto"/><path d="M610 694H621L615.5 700Z" fill="#ff9a00" shape-rendering="auto"/><path d="M23 714H131L134 717V764L131 767H23L20 764V717Z" fill="#6c6c6a"/><path d="M24 716H130L132 718V763L130 765H24L22 763V718Z" fill="#545552"/><path d="M141 714H249L252 717V764L249 767H141L138 764V717Z" fill="#6c6c6a"/><path d="M142 716H248L250 718V763L248 765H142L140 763V718Z" fill="#545552"/><path d="M259 714H367L370 717V764L367 767H259L256 764V717Z" fill="#6c6c6a"/><path d="M260 716H366L368 718V763L366 765H260L258 763V718Z" fill="#545552"/><path d="M377 714H485L488 717V764L485 767H377L374 764V717Z" fill="#6c6c6a"/><path d="M378 716H484L486 718V763L484 765H378L376 763V718Z" fill="#545552"/><path d="M495 714H603L606 717V764L603 767H495L492 764V717Z" fill="#6c6c6a"/><path d="M496 716H602L604 718V763L602 765H496L494 763V718Z" fill="#545552"/><path d="M613 714H721L724 717V764L721 767H613L610 764V717Z" fill="#6c6c6a"/><path d="M614 716H720L722 718V763L720 765H614L612 763V718Z" fill="#545552"/><path d="M731 714H839L842 717V764L839 767H731L728 764V717Z" fill="#6c6c6a"/><path d="M732 716H838L840 718V763L838 765H732L730 763V718Z" fill="#545552"/><rect x="47" y="742" width="61" height="16" fill="#0b6ef2"/><rect x="181" y="750" width="29" height="16" fill="#0b6ef2"/><rect x="299" y="742" width="29" height="16" fill="#0b6ef2"/><rect x="386.5" y="742.5" width="31" height="25" rx="3" fill="#0b6ef2" stroke="#3a8cff" shape-rendering="auto"/><rect x="771" y="742" width="29" height="16" fill="#0b6ef2"/><text id="tek" x="-1.00" y="15.00" fill="#f4f4ff" stroke="#f4f4ff" stroke-width="0.6" font-family="Liberation Serif" font-weight="normal" font-size="21.00" letter-spacing="0.000">Tek</text><text id="run" x="35.00" y="14.00" fill="#f4f4ff" stroke="#f4f4ff" stroke-width="0.3" font-family="Liberation Sans" font-weight="normal" font-size="15.94" letter-spacing="0.500">Run</text><text id="trig" x="925.00" y="14.00" fill="#f4f4ff" stroke="#f4f4ff" stroke-width="0.3" font-family="Liberation Sans" font-weight="normal" font-size="15.94" letter-spacing="1.000">Trig?</text><text id="m1" x="790.00" y="58.00" fill="#00c000" stroke="#00c000" stroke-width="0.3" font-family="Liberation Sans" font-weight="normal" font-size="15.94" letter-spacing="1.167">1.590µs</text><text id="m2" x="790.00" y="77.00" fill="#00c000" stroke="#00c000" stroke-width="0.3" font-family="Liberation Sans" font-weight="normal" font-size="15.94" letter-spacing="1.167">1.900µs</text><text id="m3" x="782.00" y="96.00" fill="#00c000" stroke="#00c000" stroke-width="0.3" font-family="Liberation Sans" font-weight="normal" font-size="15.94" letter-spacing="1.571">Δ310.0ns</text><text id="m4" x="911.00" y="58.00" fill="#00c000" stroke="#00c000" stroke-width="0.3" font-family="Liberation Sans" font-weight="normal" font-size="15.94" letter-spacing="1.286">−13.40mV</text><text id="m5" x="911.00" y="77.00" fill="#00c000" stroke="#00c000" stroke-width="0.3" font-family="Liberation Sans" font-weight="normal" font-size="15.94" letter-spacing="1.286">−24.20mV</text><text id="m6" x="910.00" y="96.00" fill="#00c000" stroke="#00c000" stroke-width="0.3" font-family="Liberation Sans" font-weight="normal" font-size="15.94" letter-spacing="1.571">Δ10.80mV</text><text id="c1" x="67.00" y="687.00" fill="#f0f000" stroke="#f0f000" stroke-width="0.3" font-family="Liberation Sans" font-weight="normal" font-size="15.94" letter-spacing="1.000">5.00 V</text><text id="c2" x="208.00" y="687.00" fill="#00e8f0" stroke="#00e8f0" stroke-width="0.3" font-family="Liberation Sans" font-weight="normal" font-size="15.94" letter-spacing="0.600">100mV</text><text id="c2o" x="269.00" y="687.00" fill="#00e8f0" stroke="#00e8f0" stroke-width="0.3" font-family="Liberation Sans" font-weight="normal" font-size="15.94" letter-spacing="1.000">Ω</text><text id="c3" x="346.00" y="687.00" fill="#b000c0" stroke="#b000c0" stroke-width="0.3" font-family="Liberation Sans" font-weight="normal" font-size="15.94" letter-spacing="1.333">50.0mVΩ</text><text id="c4" x="486.00" y="687.00" fill="#00b000" stroke="#00b000" stroke-width="0.3" font-family="Liberation Sans" font-weight="normal" font-size="15.94" letter-spacing="1.167">10.0mVΩ</text><text id="h1" x="588.00" y="688.00" fill="#f4f4ff" stroke="#f4f4ff" stroke-width="0.3" font-family="Liberation Sans" font-weight="normal" font-size="15.94" letter-spacing="1.200">1.00µs</text><text id="h2" x="624.00" y="704.00" fill="#ff9a00" stroke="#ff9a00" stroke-width="0.3" font-family="Liberation Sans" font-weight="normal" font-size="15.94" letter-spacing="1.000">1.600000µs</text><text id="s1" x="744.00" y="688.00" fill="#f4f4ff" stroke="#f4f4ff" stroke-width="0.3" font-family="Liberation Sans" font-weight="normal" font-size="15.94" letter-spacing="0.429">2.50GS/s</text><text id="s2" x="742.00" y="704.00" fill="#f4f4ff" stroke="#f4f4ff" stroke-width="0.3" font-family="Liberation Sans" font-weight="normal" font-size="15.94" letter-spacing="1.500">1M points</text><text id="tl" x="966.00" y="687.00" fill="#f4f4ff" stroke="#f4f4ff" stroke-width="0.3" font-family="Liberation Sans" font-weight="normal" font-size="15.94" letter-spacing="0.600">3.60 V</text><text id="b1" x="56.00" y="739.00" fill="#f4f4ff" stroke="#f4f4ff" stroke-width="0.3" font-family="Liberation Sans" font-weight="normal" font-size="15.94" letter-spacing="1.000">Mode</text><text id="b1v" x="49.00" y="756.00" fill="#f4f4ff" stroke="#f4f4ff" stroke-width="0.3" font-family="Liberation Sans" font-weight="normal" font-size="15.94" letter-spacing="0.400">Sample</text><text id="b2a" x="169.00" y="730.00" fill="#f4f4ff" stroke="#f4f4ff" stroke-width="0.3" font-family="Liberation Sans" font-weight="normal" font-size="15.94" letter-spacing="0.200">Record</text><text id="b2b" x="168.00" y="746.00" fill="#f4f4ff" stroke="#f4f4ff" stroke-width="0.3" font-family="Liberation Sans" font-weight="normal" font-size="15.94" letter-spacing="1.200">Length</text><text id="b2v" x="185.00" y="764.00" fill="#f4f4ff" stroke="#f4f4ff" stroke-width="0.3" font-family="Liberation Sans" font-weight="normal" font-size="15.94" letter-spacing="0.000">1M</text><text id="b3" x="282.00" y="739.00" fill="#f4f4ff" stroke="#f4f4ff" stroke-width="0.3" font-family="Liberation Sans" font-weight="normal" font-size="15.94" letter-spacing="0.500">FastAcq</text><text id="b3v" x="302.00" y="756.00" fill="#f4f4ff" stroke="#f4f4ff" stroke-width="0.3" font-family="Liberation Sans" font-weight="normal" font-size="15.94" letter-spacing="1.500">Off</text><text id="b4" x="409.00" y="734.00" fill="#f4f4ff" stroke="#f4f4ff" stroke-width="0.3" font-family="Liberation Sans" font-weight="normal" font-size="15.94" letter-spacing="0.500">Delay</text><text id="b4a" x="391.00" y="761.00" fill="#f4f4ff" stroke="#f4f4ff" stroke-width="0.3" font-family="Liberation Sans" font-weight="normal" font-size="15.94" letter-spacing="1.000">On</text><text id="b4b" x="448.00" y="761.00" fill="#f4f4ff" stroke="#f4f4ff" stroke-width="0.3" font-family="Liberation Sans" font-weight="normal" font-size="15.94" letter-spacing="1.500">Off</text><text id="b5a" x="508.00" y="739.00" fill="#f4f4ff" stroke="#f4f4ff" stroke-width="0.3" font-family="Liberation Sans" font-weight="normal" font-size="15.94" letter-spacing="1.333">Horizontal</text><text id="b5b" x="516.00" y="755.00" fill="#f4f4ff" stroke="#f4f4ff" stroke-width="0.3" font-family="Liberation Sans" font-weight="normal" font-size="15.94" letter-spacing="1.286">Position</text><text id="b6a" x="628.00" y="739.00" fill="#f4f4ff" stroke="#f4f4ff" stroke-width="0.3" font-family="Liberation Sans" font-weight="normal" font-size="15.94" letter-spacing="1.143">Waveform</text><text id="b6b" x="638.00" y="755.00" fill="#f4f4ff" stroke="#f4f4ff" stroke-width="0.3" font-family="Liberation Sans" font-weight="normal" font-size="15.94" letter-spacing="1.000">Display</text><text id="b7" x="744.00" y="739.00" fill="#f4f4ff" stroke="#f4f4ff" stroke-width="0.3" font-family="Liberation Sans" font-weight="normal" font-size="15.94" letter-spacing="0.444">XY Display</text><text id="b7v" x="774.00" y="756.00" fill="#f4f4ff" stroke="#f4f4ff" stroke-width="0.3" font-family="Liberation Sans" font-weight="normal" font-size="15.94" letter-spacing="1.500">Off</text><text id="d1" x="916.00" y="747.00" fill="#f4f4ff" stroke="#f4f4ff" stroke-width="0.3" font-family="Liberation Sans" font-weight="normal" font-size="15.94" letter-spacing="1.300">21 Jun 2023</text><text id="d2" x="915.00" y="763.00" fill="#f4f4ff" stroke="#f4f4ff" stroke-width="0.3" font-family="Liberation Sans" font-weight="normal" font-size="15.94" letter-spacing="1.143">18:39:44</text>
</svg>
</body></html>
